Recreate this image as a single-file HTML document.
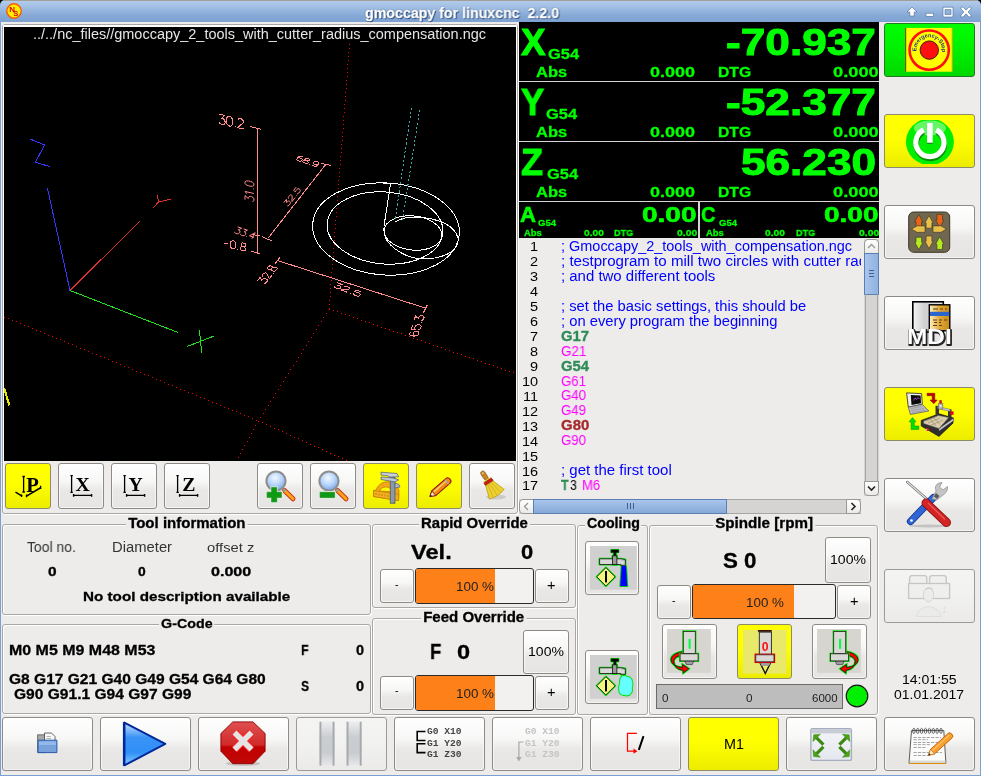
<!DOCTYPE html><html><head><meta charset="utf-8"><style>
html,body{margin:0;padding:0;}
body{width:981px;height:776px;position:relative;overflow:hidden;background:#edeceb;font-family:"Liberation Sans",sans-serif;}
.t{position:absolute;white-space:pre;line-height:1;transform-origin:0 0;will-change:transform;}
.fr{position:absolute;border:1px solid #aaa7a2;border-radius:3px;box-shadow:inset 1px 1px 0 #fff,1px 1px 0 #fff;}
.btn{position:absolute;border:1px solid #8e8b86;border-radius:3px;background:linear-gradient(#ffffff 0%,#f7f7f6 40%,#e9e8e6 60%,#e6e5e3 100%);box-shadow:inset 0 0 0 1px rgba(255,255,255,.6);overflow:hidden}
.btny{position:absolute;border:1px solid #8e8b6a;border-radius:3px;background:linear-gradient(#ffff00 0%,#ffff00 45%,#ecec00 100%);overflow:hidden}
.btng{position:absolute;border:1px solid #227a22;border-radius:3px;background:linear-gradient(#00ff00 0%,#00f000 50%,#00d800 100%);overflow:hidden}
.btnd{position:absolute;border:1px solid #9c9a96;border-radius:3px;background:linear-gradient(#f4f4f3 0%,#f1f1f0 50%,#ebeae8 100%);overflow:hidden}
</style></head><body><div style="position:absolute;left:0px;top:0px;width:6px;height:6px;background:#000;"></div>
<div style="position:absolute;left:975px;top:0px;width:6px;height:6px;background:#000;"></div>
<div style="position:absolute;left:0;top:0;width:981px;height:22px;background:linear-gradient(#b4cdeb 0%,#9fbde3 35%,#86a9d6 70%,#7da2d2 100%);border-radius:5px 5px 0 0;"></div>
<div style="position:absolute;left:4px;top:0px;width:973px;height:1px;background:#a39d98;"></div>
<div style="position:absolute;left:0px;top:22px;width:1px;height:754px;background:#7b9fd0;"></div>
<div style="position:absolute;left:980px;top:22px;width:1px;height:754px;background:#7b9fd0;"></div>
<div style="position:absolute;left:0px;top:775px;width:981px;height:1px;background:#7b9fd0;"></div>
<div class="t" style="left:364.50px;top:6.00px;font-size:14.24px;font-family:'Liberation Sans',sans-serif;font-weight:bold;color:#fff;transform:scaleX(0.9973);text-shadow:0 0 1px #1c3a66,0 0 1px #1c3a66,1px 1px 1px #2a4a78;-webkit-text-stroke:0.3px #fff;">gmoccapy for linuxcnc  2.2.0</div>
<svg style="position:absolute;left:5px;top:2px;overflow:visible;will-change:transform" width="18" height="18" viewBox="0 0 18 18"><circle cx="9" cy="9" r="7.2" fill="#ffee00" stroke="#ff5a00" stroke-width="1.4"/><text x="4.2" y="10" font-family="Liberation Sans" font-weight="bold" font-size="8" fill="#e00000">N</text><text x="8.2" y="14.2" font-family="Liberation Sans" font-weight="bold" font-size="7.5" fill="#e00000">S</text></svg>
<svg style="position:absolute;left:905px;top:5px;overflow:visible;will-change:transform" width="76" height="15" viewBox="0 0 76 15">
<g fill="#fff" stroke="#4a6a98" stroke-width="0.6">
<path d="M7 2 L12 7 L9.2 7 L9.2 11 L4.8 11 L4.8 7 L2 7 Z"/>
<rect x="21" y="8.2" width="7.4" height="3.2"/>
<path d="M38 2.2 H48 V12 H38 Z M40 4.6 V9.6 H46 V4.6 Z" fill-rule="evenodd"/>
<path d="M56 2 L58 2 L61 5.2 L64 2 L66 2 L66 4 L63 7 L66 10 L66 12 L64 12 L61 8.8 L58 12 L56 12 L56 10 L59 7 L56 4 Z"/>
</g></svg>
<div class="fr" style="left:2px;top:24px;width:514px;height:488px;"></div>
<div style="position:absolute;left:3px;top:25px;width:514px;height:436px;background:#fff;"></div>
<div style="position:absolute;left:4px;top:27px;width:512px;height:434px;background:#000;"></div>
<svg style="position:absolute;left:0px;top:0px;overflow:visible;will-change:transform" width="981" height="776" viewBox="0 0 981 776"><clipPath id="pvc"><rect x="4" y="27" width="512" height="434"/></clipPath><g clip-path="url(#pvc)" shape-rendering="crispEdges"><g fill="#ff0000"><rect x="349" y="44" width="1" height="1"/><rect x="349" y="48" width="1" height="1"/><rect x="348" y="52" width="1" height="1"/><rect x="348" y="56" width="1" height="1"/><rect x="348" y="60" width="1" height="1"/><rect x="347" y="64" width="1" height="1"/><rect x="347" y="68" width="1" height="1"/><rect x="347" y="72" width="1" height="1"/><rect x="347" y="76" width="1" height="1"/><rect x="346" y="80" width="1" height="1"/><rect x="346" y="84" width="1" height="1"/><rect x="346" y="88" width="1" height="1"/><rect x="345" y="92" width="1" height="1"/><rect x="345" y="96" width="1" height="1"/><rect x="345" y="100" width="1" height="1"/><rect x="344" y="104" width="1" height="1"/><rect x="344" y="108" width="1" height="1"/><rect x="344" y="112" width="1" height="1"/><rect x="343" y="116" width="1" height="1"/><rect x="343" y="120" width="1" height="1"/><rect x="343" y="124" width="1" height="1"/><rect x="343" y="128" width="1" height="1"/><rect x="342" y="132" width="1" height="1"/><rect x="342" y="136" width="1" height="1"/><rect x="342" y="140" width="1" height="1"/><rect x="341" y="144" width="1" height="1"/><rect x="341" y="148" width="1" height="1"/><rect x="341" y="152" width="1" height="1"/><rect x="340" y="156" width="1" height="1"/><rect x="340" y="160" width="1" height="1"/><rect x="340" y="164" width="1" height="1"/><rect x="339" y="168" width="1" height="1"/><rect x="339" y="172" width="1" height="1"/><rect x="339" y="176" width="1" height="1"/><rect x="338" y="180" width="1" height="1"/><rect x="338" y="184" width="1" height="1"/><rect x="338" y="188" width="1" height="1"/><rect x="338" y="192" width="1" height="1"/><rect x="337" y="196" width="1" height="1"/><rect x="337" y="200" width="1" height="1"/><rect x="337" y="204" width="1" height="1"/><rect x="336" y="208" width="1" height="1"/><rect x="336" y="212" width="1" height="1"/><rect x="336" y="216" width="1" height="1"/><rect x="335" y="220" width="1" height="1"/><rect x="335" y="224" width="1" height="1"/><rect x="335" y="228" width="1" height="1"/><rect x="334" y="232" width="1" height="1"/><rect x="334" y="236" width="1" height="1"/><rect x="334" y="240" width="1" height="1"/><rect x="334" y="244" width="1" height="1"/><rect x="333" y="248" width="1" height="1"/><rect x="333" y="252" width="1" height="1"/><rect x="333" y="256" width="1" height="1"/><rect x="332" y="260" width="1" height="1"/><rect x="332" y="264" width="1" height="1"/><rect x="332" y="268" width="1" height="1"/><rect x="331" y="272" width="1" height="1"/><rect x="331" y="276" width="1" height="1"/><rect x="331" y="280" width="1" height="1"/><rect x="330" y="284" width="1" height="1"/><rect x="330" y="288" width="1" height="1"/><rect x="330" y="292" width="1" height="1"/><rect x="330" y="296" width="1" height="1"/><rect x="329" y="300" width="1" height="1"/><rect x="329" y="304" width="1" height="1"/><rect x="329" y="308" width="1" height="1"/></g><g fill="#ff0000"><rect x="329" y="309" width="1" height="1"/><rect x="333" y="310" width="1" height="1"/><rect x="337" y="311" width="1" height="1"/><rect x="341" y="313" width="1" height="1"/><rect x="345" y="314" width="1" height="1"/><rect x="349" y="315" width="1" height="1"/><rect x="353" y="317" width="1" height="1"/><rect x="357" y="318" width="1" height="1"/><rect x="361" y="320" width="1" height="1"/><rect x="365" y="321" width="1" height="1"/><rect x="369" y="322" width="1" height="1"/><rect x="373" y="324" width="1" height="1"/><rect x="377" y="325" width="1" height="1"/><rect x="381" y="327" width="1" height="1"/><rect x="385" y="328" width="1" height="1"/><rect x="389" y="329" width="1" height="1"/><rect x="393" y="331" width="1" height="1"/><rect x="397" y="332" width="1" height="1"/><rect x="401" y="333" width="1" height="1"/><rect x="405" y="335" width="1" height="1"/><rect x="409" y="336" width="1" height="1"/><rect x="413" y="338" width="1" height="1"/><rect x="417" y="339" width="1" height="1"/><rect x="421" y="340" width="1" height="1"/><rect x="425" y="342" width="1" height="1"/><rect x="429" y="343" width="1" height="1"/><rect x="433" y="345" width="1" height="1"/><rect x="437" y="346" width="1" height="1"/><rect x="441" y="347" width="1" height="1"/><rect x="445" y="349" width="1" height="1"/><rect x="449" y="350" width="1" height="1"/><rect x="453" y="352" width="1" height="1"/><rect x="457" y="353" width="1" height="1"/><rect x="461" y="354" width="1" height="1"/><rect x="465" y="356" width="1" height="1"/><rect x="469" y="357" width="1" height="1"/><rect x="473" y="358" width="1" height="1"/><rect x="477" y="360" width="1" height="1"/><rect x="481" y="361" width="1" height="1"/><rect x="485" y="363" width="1" height="1"/><rect x="489" y="364" width="1" height="1"/><rect x="493" y="365" width="1" height="1"/><rect x="497" y="367" width="1" height="1"/><rect x="501" y="368" width="1" height="1"/><rect x="505" y="370" width="1" height="1"/><rect x="509" y="371" width="1" height="1"/><rect x="513" y="372" width="1" height="1"/></g><g fill="#ff0000"><rect x="329" y="309" width="1" height="1"/><rect x="326" y="313" width="1" height="1"/><rect x="323" y="317" width="1" height="1"/><rect x="321" y="321" width="1" height="1"/><rect x="318" y="325" width="1" height="1"/><rect x="316" y="329" width="1" height="1"/><rect x="313" y="333" width="1" height="1"/><rect x="311" y="337" width="1" height="1"/><rect x="308" y="341" width="1" height="1"/><rect x="306" y="345" width="1" height="1"/><rect x="303" y="349" width="1" height="1"/><rect x="301" y="353" width="1" height="1"/><rect x="298" y="357" width="1" height="1"/><rect x="296" y="361" width="1" height="1"/><rect x="293" y="365" width="1" height="1"/><rect x="290" y="369" width="1" height="1"/><rect x="288" y="373" width="1" height="1"/><rect x="285" y="377" width="1" height="1"/><rect x="283" y="381" width="1" height="1"/><rect x="280" y="385" width="1" height="1"/><rect x="278" y="389" width="1" height="1"/><rect x="275" y="393" width="1" height="1"/><rect x="273" y="397" width="1" height="1"/><rect x="270" y="401" width="1" height="1"/><rect x="268" y="405" width="1" height="1"/><rect x="265" y="409" width="1" height="1"/><rect x="263" y="413" width="1" height="1"/><rect x="260" y="417" width="1" height="1"/><rect x="258" y="421" width="1" height="1"/></g><g fill="#ff0000"><rect x="4" y="317" width="1" height="1"/><rect x="8" y="318" width="1" height="1"/><rect x="12" y="320" width="1" height="1"/><rect x="16" y="321" width="1" height="1"/><rect x="20" y="323" width="1" height="1"/><rect x="24" y="325" width="1" height="1"/><rect x="28" y="326" width="1" height="1"/><rect x="32" y="328" width="1" height="1"/><rect x="36" y="330" width="1" height="1"/><rect x="40" y="331" width="1" height="1"/><rect x="44" y="333" width="1" height="1"/><rect x="48" y="335" width="1" height="1"/><rect x="52" y="336" width="1" height="1"/><rect x="56" y="338" width="1" height="1"/><rect x="60" y="339" width="1" height="1"/><rect x="64" y="341" width="1" height="1"/><rect x="68" y="343" width="1" height="1"/><rect x="72" y="344" width="1" height="1"/><rect x="76" y="346" width="1" height="1"/><rect x="80" y="348" width="1" height="1"/><rect x="84" y="349" width="1" height="1"/><rect x="88" y="351" width="1" height="1"/><rect x="92" y="353" width="1" height="1"/><rect x="96" y="354" width="1" height="1"/><rect x="100" y="356" width="1" height="1"/><rect x="104" y="357" width="1" height="1"/><rect x="108" y="359" width="1" height="1"/><rect x="112" y="361" width="1" height="1"/><rect x="116" y="362" width="1" height="1"/><rect x="120" y="364" width="1" height="1"/><rect x="124" y="366" width="1" height="1"/><rect x="128" y="367" width="1" height="1"/><rect x="132" y="369" width="1" height="1"/><rect x="136" y="371" width="1" height="1"/><rect x="140" y="372" width="1" height="1"/><rect x="144" y="374" width="1" height="1"/><rect x="148" y="375" width="1" height="1"/><rect x="152" y="377" width="1" height="1"/><rect x="156" y="379" width="1" height="1"/><rect x="160" y="380" width="1" height="1"/><rect x="164" y="382" width="1" height="1"/><rect x="168" y="384" width="1" height="1"/><rect x="172" y="385" width="1" height="1"/><rect x="176" y="387" width="1" height="1"/><rect x="180" y="389" width="1" height="1"/><rect x="184" y="390" width="1" height="1"/><rect x="188" y="392" width="1" height="1"/><rect x="192" y="393" width="1" height="1"/><rect x="196" y="395" width="1" height="1"/><rect x="200" y="397" width="1" height="1"/><rect x="204" y="398" width="1" height="1"/><rect x="208" y="400" width="1" height="1"/><rect x="212" y="402" width="1" height="1"/><rect x="216" y="403" width="1" height="1"/><rect x="220" y="405" width="1" height="1"/><rect x="224" y="407" width="1" height="1"/><rect x="228" y="408" width="1" height="1"/><rect x="232" y="410" width="1" height="1"/><rect x="236" y="411" width="1" height="1"/><rect x="240" y="413" width="1" height="1"/><rect x="244" y="415" width="1" height="1"/><rect x="248" y="416" width="1" height="1"/><rect x="252" y="418" width="1" height="1"/><rect x="256" y="420" width="1" height="1"/></g><g fill="#ff0000"><rect x="258" y="421" width="1" height="1"/><rect x="255" y="425" width="1" height="1"/><rect x="253" y="429" width="1" height="1"/><rect x="251" y="433" width="1" height="1"/><rect x="249" y="437" width="1" height="1"/><rect x="247" y="441" width="1" height="1"/><rect x="244" y="445" width="1" height="1"/><rect x="242" y="449" width="1" height="1"/><rect x="240" y="453" width="1" height="1"/><rect x="238" y="457" width="1" height="1"/><rect x="236" y="461" width="1" height="1"/></g><g fill="#ff0000"><rect x="258" y="421" width="1" height="1"/><rect x="262" y="422" width="1" height="1"/><rect x="266" y="424" width="1" height="1"/><rect x="270" y="426" width="1" height="1"/><rect x="274" y="428" width="1" height="1"/><rect x="278" y="429" width="1" height="1"/><rect x="282" y="431" width="1" height="1"/><rect x="286" y="433" width="1" height="1"/><rect x="290" y="435" width="1" height="1"/><rect x="294" y="437" width="1" height="1"/><rect x="298" y="438" width="1" height="1"/><rect x="302" y="440" width="1" height="1"/><rect x="306" y="442" width="1" height="1"/><rect x="310" y="444" width="1" height="1"/><rect x="314" y="446" width="1" height="1"/><rect x="318" y="447" width="1" height="1"/><rect x="322" y="449" width="1" height="1"/><rect x="326" y="451" width="1" height="1"/><rect x="330" y="453" width="1" height="1"/><rect x="334" y="455" width="1" height="1"/><rect x="338" y="456" width="1" height="1"/><rect x="342" y="458" width="1" height="1"/><rect x="346" y="460" width="1" height="1"/></g><g fill="none" stroke-width="1"><polyline points="30,139 44.6,145 35.4,162.2 49.6,166.6" stroke="#3838ff"/><line x1="70" y1="290.5" x2="47.4" y2="188" stroke="#3838ff"/><line x1="70" y1="290.5" x2="140" y2="221" stroke="#e03030"/><path d="M157.4 195 L158.6 202 L170.9 199 M158.6 202 L153.2 207.8" stroke="#e03030"/><line x1="70" y1="290.5" x2="177.8" y2="332.4" stroke="#20e020"/><path d="M187.1 346.5 L213.8 336.1 M199.4 330 L201.7 352.8" stroke="#20e020"/></g><line x1="4" y1="388" x2="9.5" y2="405.5" stroke="#e8e800" stroke-width="2.2"/><g fill="none" stroke="#ff8c8c" stroke-width="1"><line x1="257" y1="128.6" x2="257" y2="252.8"/><line x1="249.9" y1="126.6" x2="261.5" y2="129.4"/><line x1="251" y1="251.2" x2="260.3" y2="253.8"/><line x1="252" y1="234.5" x2="260" y2="236"/><line x1="267.9" y1="238.4" x2="325.4" y2="164.9"/><line x1="320.8" y1="163.3" x2="330.8" y2="165.3"/><line x1="262.3" y1="236.8" x2="271.5" y2="240.8"/><line x1="278.1" y1="260.7" x2="425.3" y2="308.1"/><line x1="275.2" y1="263.6" x2="280" y2="257.4"/><line x1="423.3" y1="313" x2="427.2" y2="305.2"/></g><g transform="matrix(1.0 0.21 0 0.96 219.00 114.20)" fill="none" stroke="#ff8c8c" stroke-width="1" vector-effect="non-scaling-stroke"><path d="M0.5 0 L5.5 0 L2.8 3.8 L4 3.8 L5.4 4.6 L6 6.3 L6 7.5 L5.3 9.2 L4 10 L2 10 L0.7 9.4 L0 8.4" transform="translate(0 0)" vector-effect="non-scaling-stroke"/><path d="M2 0 L4 0 L5.5 1.5 L6 4 L6 6 L5.5 8.5 L4 10 L2 10 L0.5 8.5 L0 6 L0 4 L0.5 1.5 Z" transform="translate(7.5 0)" vector-effect="non-scaling-stroke"/><path d="M0.5 9.5 L1.5 9.5" transform="translate(15.0 0)" vector-effect="non-scaling-stroke"/><path d="M0.3 2.2 L1 0.7 L2.3 0 L3.8 0 L5.2 0.7 L5.8 2 L5.6 3.5 L4.5 5 L0 10 L6 10" transform="translate(18.5 0)" vector-effect="non-scaling-stroke"/></g><g transform="matrix(0 -0.81 0.89 0.2 245.00 200.00)" fill="none" stroke="#ff8c8c" stroke-width="1" vector-effect="non-scaling-stroke"><path d="M0.5 0 L5.5 0 L2.8 3.8 L4 3.8 L5.4 4.6 L6 6.3 L6 7.5 L5.3 9.2 L4 10 L2 10 L0.7 9.4 L0 8.4" transform="translate(0 0)" vector-effect="non-scaling-stroke"/><path d="M0.8 2 L3 0 L3 10" transform="translate(7.5 0)" vector-effect="non-scaling-stroke"/><path d="M0.5 9.5 L1.5 9.5" transform="translate(15.0 0)" vector-effect="non-scaling-stroke"/><path d="M2 0 L4 0 L5.5 1.5 L6 4 L6 6 L5.5 8.5 L4 10 L2 10 L0.5 8.5 L0 6 L0 4 L0.5 1.5 Z" transform="translate(18.5 0)" vector-effect="non-scaling-stroke"/></g><g transform="matrix(0.78 0.26 -0.33 0.6 237.30 226.80)" fill="none" stroke="#ff8c8c" stroke-width="1" vector-effect="non-scaling-stroke"><path d="M0.5 0 L5.5 0 L2.8 3.8 L4 3.8 L5.4 4.6 L6 6.3 L6 7.5 L5.3 9.2 L4 10 L2 10 L0.7 9.4 L0 8.4" transform="translate(0 0)" vector-effect="non-scaling-stroke"/><path d="M0.5 0 L5.5 0 L2.8 3.8 L4 3.8 L5.4 4.6 L6 6.3 L6 7.5 L5.3 9.2 L4 10 L2 10 L0.7 9.4 L0 8.4" transform="translate(7.5 0)" vector-effect="non-scaling-stroke"/><path d="M0.5 9.5 L1.5 9.5" transform="translate(15.0 0)" vector-effect="non-scaling-stroke"/><path d="M4.5 10 L4.5 0 L0 7 L6 7" transform="translate(18.5 0)" vector-effect="non-scaling-stroke"/></g><g transform="matrix(0.92 0.2 -0.05 0.77 223.60 238.80)" fill="none" stroke="#ff8c8c" stroke-width="1" vector-effect="non-scaling-stroke"><path d="M0.5 5.5 L5 5.5" transform="translate(0 0)" vector-effect="non-scaling-stroke"/><path d="M2 0 L4 0 L5.5 1.5 L6 4 L6 6 L5.5 8.5 L4 10 L2 10 L0.5 8.5 L0 6 L0 4 L0.5 1.5 Z" transform="translate(7.5 0)" vector-effect="non-scaling-stroke"/><path d="M0.5 9.5 L1.5 9.5" transform="translate(15.0 0)" vector-effect="non-scaling-stroke"/><path d="M2.2 0 L0.8 0.5 L0.5 2 L0.8 3.5 L2.2 4.4 L3.8 4.8 L5.3 5.8 L6 7.2 L6 8.5 L5.5 9.5 L4 10 L2 10 L0.5 9.5 L0 8.5 L0 7.2 L0.7 5.8 L2.2 4.8 L3.8 4.4 L5.2 3.5 L5.5 2 L5.2 0.5 L3.8 0 Z" transform="translate(18.5 0)" vector-effect="non-scaling-stroke"/></g><g transform="matrix(0.84 0.28 -0.3 0.45 299.00 155.50)" fill="none" stroke="#ff8c8c" stroke-width="1" vector-effect="non-scaling-stroke"><path d="M5.3 1.2 L4.5 0.2 L3.2 0 L2 0.2 L0.7 1.5 L0 4 L0 6.5 L0.6 8.8 L1.8 9.8 L3 10 L4.3 9.8 L5.5 8.8 L6 7.2 L6 6.5 L5.5 5 L4.3 4 L3 3.8 L1.8 4 L0.6 5 L0 6.5" transform="translate(0 0)" vector-effect="non-scaling-stroke"/><path d="M2.2 0 L0.8 0.5 L0.5 2 L0.8 3.5 L2.2 4.4 L3.8 4.8 L5.3 5.8 L6 7.2 L6 8.5 L5.5 9.5 L4 10 L2 10 L0.5 9.5 L0 8.5 L0 7.2 L0.7 5.8 L2.2 4.8 L3.8 4.4 L5.2 3.5 L5.5 2 L5.2 0.5 L3.8 0 Z" transform="translate(7.5 0)" vector-effect="non-scaling-stroke"/><path d="M0.5 9.5 L1.5 9.5" transform="translate(15.0 0)" vector-effect="non-scaling-stroke"/><path d="M6 4 L5.4 5.5 L4.2 6.3 L3 6.5 L1.8 6.3 L0.6 5.5 L0 4 L0 3.2 L0.6 1.3 L1.8 0.2 L3 0 L4.2 0.2 L5.4 1.3 L6 3.2 L6 6 L5.4 8.8 L4.2 9.8 L3 10 L1.7 9.8 L0.8 9" transform="translate(18.5 0)" vector-effect="non-scaling-stroke"/></g><g transform="matrix(0.53 -0.66 0.45 0.35 283.50 203.00)" fill="none" stroke="#ff8c8c" stroke-width="1" vector-effect="non-scaling-stroke"><path d="M0.5 0 L5.5 0 L2.8 3.8 L4 3.8 L5.4 4.6 L6 6.3 L6 7.5 L5.3 9.2 L4 10 L2 10 L0.7 9.4 L0 8.4" transform="translate(0 0)" vector-effect="non-scaling-stroke"/><path d="M0.3 2.2 L1 0.7 L2.3 0 L3.8 0 L5.2 0.7 L5.8 2 L5.6 3.5 L4.5 5 L0 10 L6 10" transform="translate(7.5 0)" vector-effect="non-scaling-stroke"/><path d="M0.5 9.5 L1.5 9.5" transform="translate(15.0 0)" vector-effect="non-scaling-stroke"/><path d="M5.5 0 L0.8 0 L0.4 4.3 L1 3.8 L2.5 3.4 L4 3.4 L5.4 4.2 L6 6 L6 7.4 L5.4 9.2 L4 10 L2 10 L0.7 9.4 L0 8.4" transform="translate(18.5 0)" vector-effect="non-scaling-stroke"/></g><g transform="matrix(0.51 -0.65 0.82 0.26 257.20 281.10)" fill="none" stroke="#ff8c8c" stroke-width="1" vector-effect="non-scaling-stroke"><path d="M0.5 0 L5.5 0 L2.8 3.8 L4 3.8 L5.4 4.6 L6 6.3 L6 7.5 L5.3 9.2 L4 10 L2 10 L0.7 9.4 L0 8.4" transform="translate(0 0)" vector-effect="non-scaling-stroke"/><path d="M0.3 2.2 L1 0.7 L2.3 0 L3.8 0 L5.2 0.7 L5.8 2 L5.6 3.5 L4.5 5 L0 10 L6 10" transform="translate(7.5 0)" vector-effect="non-scaling-stroke"/><path d="M0.5 9.5 L1.5 9.5" transform="translate(15.0 0)" vector-effect="non-scaling-stroke"/><path d="M2.2 0 L0.8 0.5 L0.5 2 L0.8 3.5 L2.2 4.4 L3.8 4.8 L5.3 5.8 L6 7.2 L6 8.5 L5.5 9.5 L4 10 L2 10 L0.5 9.5 L0 8.5 L0 7.2 L0.7 5.8 L2.2 4.8 L3.8 4.4 L5.2 3.5 L5.5 2 L5.2 0.5 L3.8 0 Z" transform="translate(18.5 0)" vector-effect="non-scaling-stroke"/></g><g transform="matrix(1.04 0.4 -0.28 0.46 336.30 282.40)" fill="none" stroke="#ff8c8c" stroke-width="1" vector-effect="non-scaling-stroke"><path d="M0.5 0 L5.5 0 L2.8 3.8 L4 3.8 L5.4 4.6 L6 6.3 L6 7.5 L5.3 9.2 L4 10 L2 10 L0.7 9.4 L0 8.4" transform="translate(0 0)" vector-effect="non-scaling-stroke"/><path d="M0.3 2.2 L1 0.7 L2.3 0 L3.8 0 L5.2 0.7 L5.8 2 L5.6 3.5 L4.5 5 L0 10 L6 10" transform="translate(7.5 0)" vector-effect="non-scaling-stroke"/><path d="M0.5 9.5 L1.5 9.5" transform="translate(15.0 0)" vector-effect="non-scaling-stroke"/><path d="M5.5 0 L0.8 0 L0.4 4.3 L1 3.8 L2.5 3.4 L4 3.4 L5.4 4.2 L6 6 L6 7.4 L5.4 9.2 L4 10 L2 10 L0.7 9.4 L0 8.4" transform="translate(18.5 0)" vector-effect="non-scaling-stroke"/></g><g transform="matrix(0.27 -0.83 0.9 0 409.00 336.00)" fill="none" stroke="#ff8c8c" stroke-width="1" vector-effect="non-scaling-stroke"><path d="M5.3 1.2 L4.5 0.2 L3.2 0 L2 0.2 L0.7 1.5 L0 4 L0 6.5 L0.6 8.8 L1.8 9.8 L3 10 L4.3 9.8 L5.5 8.8 L6 7.2 L6 6.5 L5.5 5 L4.3 4 L3 3.8 L1.8 4 L0.6 5 L0 6.5" transform="translate(0 0)" vector-effect="non-scaling-stroke"/><path d="M5.5 0 L0.8 0 L0.4 4.3 L1 3.8 L2.5 3.4 L4 3.4 L5.4 4.2 L6 6 L6 7.4 L5.4 9.2 L4 10 L2 10 L0.7 9.4 L0 8.4" transform="translate(7.5 0)" vector-effect="non-scaling-stroke"/><path d="M0.5 9.5 L1.5 9.5" transform="translate(15.0 0)" vector-effect="non-scaling-stroke"/><path d="M0.5 0 L5.5 0 L2.8 3.8 L4 3.8 L5.4 4.6 L6 6.3 L6 7.5 L5.3 9.2 L4 10 L2 10 L0.7 9.4 L0 8.4" transform="translate(18.5 0)" vector-effect="non-scaling-stroke"/></g><g fill="none" stroke="#ffffff" stroke-width="1"><ellipse cx="386" cy="229" rx="73.5" ry="46" transform="rotate(4 386 229)"/><ellipse cx="385" cy="228" rx="58" ry="36" transform="rotate(5 385 228)"/><path d="M383 183.5 L390.6 183.5 L384 226 "/><ellipse cx="413" cy="233" rx="29" ry="17" transform="rotate(6 413 233)"/><path d="M384 228 C 382 245, 405 258, 422 259 C 445 259, 460 250, 458 238 C 455 226, 440 218, 415 217 C 405 217, 398 220, 395 222"/></g><g stroke="#3aa6a6" stroke-width="1" stroke-dasharray="2.2 2.2"><line x1="411.5" y1="107.6" x2="395" y2="221"/><line x1="419.7" y1="109.6" x2="402" y2="223"/></g></g></svg>
<div class="t" style="left:33.00px;top:27.00px;font-size:14.39px;font-family:'Liberation Sans',sans-serif;font-weight:normal;color:#e6e6e6;transform:scaleX(1.0070);">../../nc_files//gmoccapy_2_tools_with_cutter_radius_compensation.ngc</div>
<div class="btny" style="left:5px;top:463px;width:44px;height:44px;"></div>
<div class="btn" style="left:58px;top:463px;width:44px;height:44px;"></div>
<div class="btn" style="left:111px;top:463px;width:44px;height:44px;"></div>
<div class="btn" style="left:164px;top:463px;width:44px;height:44px;"></div>
<div class="btn" style="left:257px;top:463px;width:44px;height:44px;"></div>
<div class="btn" style="left:310px;top:463px;width:44px;height:44px;"></div>
<div class="btny" style="left:363px;top:463px;width:44px;height:44px;"></div>
<div class="btny" style="left:416px;top:463px;width:44px;height:44px;"></div>
<div class="btn" style="left:469px;top:463px;width:44px;height:44px;"></div>
<div style="position:absolute;left:519px;top:22px;width:360px;height:216px;background:#000;"></div>
<div style="position:absolute;left:519px;top:81px;width:360px;height:1px;background:#d6d6d6;"></div>
<div style="position:absolute;left:519px;top:141px;width:360px;height:1px;background:#d6d6d6;"></div>
<div style="position:absolute;left:519px;top:201px;width:360px;height:1px;background:#d6d6d6;"></div>
<div style="position:absolute;left:698px;top:202px;width:2px;height:36px;background:#d6d6d6;"></div>
<div class="t" style="left:520.50px;top:25.00px;font-size:36.63px;font-family:'Liberation Sans',sans-serif;font-weight:bold;color:#00ff00;transform:scaleX(1.0069);-webkit-text-stroke:1px #00ff00;">X</div>
<div class="t" style="left:547.70px;top:47.00px;font-size:14.83px;font-family:'Liberation Sans',sans-serif;font-weight:bold;color:#00ff00;transform:scaleX(1.1099);-webkit-text-stroke:0.3px #00ff00;">G54</div>
<div class="t" style="left:536.20px;top:65.00px;font-size:14.86px;font-family:'Liberation Sans',sans-serif;font-weight:bold;color:#00ff00;transform:scaleX(1.1078);-webkit-text-stroke:0.3px #00ff00;">Abs</div>
<div class="t" style="left:649.70px;top:65.00px;font-size:14.86px;font-family:'Liberation Sans',sans-serif;font-weight:bold;color:#00ff00;transform:scaleX(1.2133);-webkit-text-stroke:0.3px #00ff00;">0.000</div>
<div class="t" style="left:717.70px;top:65.00px;font-size:14.83px;font-family:'Liberation Sans',sans-serif;font-weight:bold;color:#00ff00;transform:scaleX(1.0576);-webkit-text-stroke:0.3px #00ff00;">DTG</div>
<div class="t" style="left:833.10px;top:65.00px;font-size:14.86px;font-family:'Liberation Sans',sans-serif;font-weight:bold;color:#00ff00;transform:scaleX(1.2294);-webkit-text-stroke:0.3px #00ff00;">0.000</div>
<div class="t" style="left:725.50px;top:24.00px;font-size:37.29px;font-family:'Liberation Sans',sans-serif;font-weight:bold;color:#00ff00;transform:scaleX(1.1860);-webkit-text-stroke:1px #00ff00;">-70.937</div>
<div class="t" style="left:520.50px;top:85.00px;font-size:36.63px;font-family:'Liberation Sans',sans-serif;font-weight:bold;color:#00ff00;transform:scaleX(0.9496);-webkit-text-stroke:1px #00ff00;">Y</div>
<div class="t" style="left:545.70px;top:107.00px;font-size:14.83px;font-family:'Liberation Sans',sans-serif;font-weight:bold;color:#00ff00;transform:scaleX(1.1099);-webkit-text-stroke:0.3px #00ff00;">G54</div>
<div class="t" style="left:536.20px;top:125.00px;font-size:14.86px;font-family:'Liberation Sans',sans-serif;font-weight:bold;color:#00ff00;transform:scaleX(1.1078);-webkit-text-stroke:0.3px #00ff00;">Abs</div>
<div class="t" style="left:649.70px;top:125.00px;font-size:14.86px;font-family:'Liberation Sans',sans-serif;font-weight:bold;color:#00ff00;transform:scaleX(1.2133);-webkit-text-stroke:0.3px #00ff00;">0.000</div>
<div class="t" style="left:717.70px;top:125.00px;font-size:14.83px;font-family:'Liberation Sans',sans-serif;font-weight:bold;color:#00ff00;transform:scaleX(1.0576);-webkit-text-stroke:0.3px #00ff00;">DTG</div>
<div class="t" style="left:833.10px;top:125.00px;font-size:14.86px;font-family:'Liberation Sans',sans-serif;font-weight:bold;color:#00ff00;transform:scaleX(1.2294);-webkit-text-stroke:0.3px #00ff00;">0.000</div>
<div class="t" style="left:725.50px;top:84.00px;font-size:37.29px;font-family:'Liberation Sans',sans-serif;font-weight:bold;color:#00ff00;transform:scaleX(1.1860);-webkit-text-stroke:1px #00ff00;">-52.377</div>
<div class="t" style="left:520.50px;top:145.00px;font-size:36.63px;font-family:'Liberation Sans',sans-serif;font-weight:bold;color:#00ff00;transform:scaleX(0.9830);-webkit-text-stroke:1px #00ff00;">Z</div>
<div class="t" style="left:546.50px;top:167.00px;font-size:14.83px;font-family:'Liberation Sans',sans-serif;font-weight:bold;color:#00ff00;transform:scaleX(1.1099);-webkit-text-stroke:0.3px #00ff00;">G54</div>
<div class="t" style="left:536.20px;top:185.00px;font-size:14.86px;font-family:'Liberation Sans',sans-serif;font-weight:bold;color:#00ff00;transform:scaleX(1.1078);-webkit-text-stroke:0.3px #00ff00;">Abs</div>
<div class="t" style="left:649.70px;top:185.00px;font-size:14.86px;font-family:'Liberation Sans',sans-serif;font-weight:bold;color:#00ff00;transform:scaleX(1.2133);-webkit-text-stroke:0.3px #00ff00;">0.000</div>
<div class="t" style="left:717.70px;top:185.00px;font-size:14.83px;font-family:'Liberation Sans',sans-serif;font-weight:bold;color:#00ff00;transform:scaleX(1.0576);-webkit-text-stroke:0.3px #00ff00;">DTG</div>
<div class="t" style="left:833.10px;top:185.00px;font-size:14.86px;font-family:'Liberation Sans',sans-serif;font-weight:bold;color:#00ff00;transform:scaleX(1.2294);-webkit-text-stroke:0.3px #00ff00;">0.000</div>
<div class="t" style="left:740.50px;top:144.00px;font-size:37.29px;font-family:'Liberation Sans',sans-serif;font-weight:bold;color:#00ff00;transform:scaleX(1.1836);-webkit-text-stroke:1px #00ff00;">56.230</div>
<div class="t" style="left:519.60px;top:204.00px;font-size:22.14px;font-family:'Liberation Sans',sans-serif;font-weight:bold;color:#00ff00;transform:scaleX(1.0008);-webkit-text-stroke:0.6px #00ff00;">A</div>
<div class="t" style="left:537.90px;top:218.00px;font-size:9.45px;font-family:'Liberation Sans',sans-serif;font-weight:bold;color:#00ff00;transform:scaleX(1.0137);-webkit-text-stroke:0.3px #00ff00;">G54</div>
<div class="t" style="left:524.30px;top:229.00px;font-size:8.89px;font-family:'Liberation Sans',sans-serif;font-weight:bold;color:#00ff00;transform:scaleX(1.0601);-webkit-text-stroke:0.3px #00ff00;">Abs</div>
<div class="t" style="left:583.80px;top:229.00px;font-size:9.14px;font-family:'Liberation Sans',sans-serif;font-weight:bold;color:#00ff00;transform:scaleX(1.1185);-webkit-text-stroke:0.3px #00ff00;">0.00</div>
<div class="t" style="left:614.40px;top:229.00px;font-size:9.30px;font-family:'Liberation Sans',sans-serif;font-weight:bold;color:#00ff00;transform:scaleX(0.9726);-webkit-text-stroke:0.3px #00ff00;">DTG</div>
<div class="t" style="left:677.30px;top:229.00px;font-size:9.14px;font-family:'Liberation Sans',sans-serif;font-weight:bold;color:#00ff00;transform:scaleX(1.1353);-webkit-text-stroke:0.3px #00ff00;">0.00</div>
<div class="t" style="left:642.20px;top:205.00px;font-size:21.29px;font-family:'Liberation Sans',sans-serif;font-weight:bold;color:#00ff00;transform:scaleX(1.3157);-webkit-text-stroke:0.6px #00ff00;">0.00</div>
<div class="t" style="left:701.10px;top:204.00px;font-size:22.14px;font-family:'Liberation Sans',sans-serif;font-weight:bold;color:#00ff00;transform:scaleX(0.9070);-webkit-text-stroke:0.6px #00ff00;">C</div>
<div class="t" style="left:719.40px;top:218.00px;font-size:9.45px;font-family:'Liberation Sans',sans-serif;font-weight:bold;color:#00ff00;transform:scaleX(1.0137);-webkit-text-stroke:0.3px #00ff00;">G54</div>
<div class="t" style="left:705.80px;top:229.00px;font-size:8.89px;font-family:'Liberation Sans',sans-serif;font-weight:bold;color:#00ff00;transform:scaleX(1.0601);-webkit-text-stroke:0.3px #00ff00;">Abs</div>
<div class="t" style="left:765.30px;top:229.00px;font-size:9.14px;font-family:'Liberation Sans',sans-serif;font-weight:bold;color:#00ff00;transform:scaleX(1.1185);-webkit-text-stroke:0.3px #00ff00;">0.00</div>
<div class="t" style="left:795.90px;top:229.00px;font-size:9.30px;font-family:'Liberation Sans',sans-serif;font-weight:bold;color:#00ff00;transform:scaleX(0.9726);-webkit-text-stroke:0.3px #00ff00;">DTG</div>
<div class="t" style="left:858.80px;top:229.00px;font-size:9.14px;font-family:'Liberation Sans',sans-serif;font-weight:bold;color:#00ff00;transform:scaleX(1.1353);-webkit-text-stroke:0.3px #00ff00;">0.00</div>
<div class="t" style="left:823.70px;top:205.00px;font-size:21.29px;font-family:'Liberation Sans',sans-serif;font-weight:bold;color:#00ff00;transform:scaleX(1.3157);-webkit-text-stroke:0.6px #00ff00;">0.00</div>
<div style="position:absolute;left:519px;top:238px;width:345px;height:261px;background:#edeceb;"></div>
<div class="t" style="left:530.34px;top:240.00px;font-size:13.43px;font-family:'Liberation Sans',sans-serif;font-weight:normal;color:#000;transform:scaleX(1.0800);">1</div>
<div class="t" style="left:530.34px;top:255.00px;font-size:13.43px;font-family:'Liberation Sans',sans-serif;font-weight:normal;color:#000;transform:scaleX(1.0800);">2</div>
<div class="t" style="left:530.34px;top:270.00px;font-size:13.43px;font-family:'Liberation Sans',sans-serif;font-weight:normal;color:#000;transform:scaleX(1.0800);">3</div>
<div class="t" style="left:530.34px;top:285.00px;font-size:13.43px;font-family:'Liberation Sans',sans-serif;font-weight:normal;color:#000;transform:scaleX(1.0800);">4</div>
<div class="t" style="left:530.34px;top:300.00px;font-size:13.43px;font-family:'Liberation Sans',sans-serif;font-weight:normal;color:#000;transform:scaleX(1.0800);">5</div>
<div class="t" style="left:530.34px;top:315.00px;font-size:13.43px;font-family:'Liberation Sans',sans-serif;font-weight:normal;color:#000;transform:scaleX(1.0800);">6</div>
<div class="t" style="left:530.34px;top:330.00px;font-size:13.43px;font-family:'Liberation Sans',sans-serif;font-weight:normal;color:#000;transform:scaleX(1.0800);">7</div>
<div class="t" style="left:530.34px;top:345.00px;font-size:13.43px;font-family:'Liberation Sans',sans-serif;font-weight:normal;color:#000;transform:scaleX(1.0800);">8</div>
<div class="t" style="left:530.34px;top:360.00px;font-size:13.43px;font-family:'Liberation Sans',sans-serif;font-weight:normal;color:#000;transform:scaleX(1.0800);">9</div>
<div class="t" style="left:522.27px;top:375.00px;font-size:13.43px;font-family:'Liberation Sans',sans-serif;font-weight:normal;color:#000;transform:scaleX(1.0800);">10</div>
<div class="t" style="left:523.35px;top:390.00px;font-size:13.43px;font-family:'Liberation Sans',sans-serif;font-weight:normal;color:#000;transform:scaleX(1.0800);">11</div>
<div class="t" style="left:522.27px;top:405.00px;font-size:13.43px;font-family:'Liberation Sans',sans-serif;font-weight:normal;color:#000;transform:scaleX(1.0800);">12</div>
<div class="t" style="left:522.27px;top:420.00px;font-size:13.43px;font-family:'Liberation Sans',sans-serif;font-weight:normal;color:#000;transform:scaleX(1.0800);">13</div>
<div class="t" style="left:522.27px;top:435.00px;font-size:13.43px;font-family:'Liberation Sans',sans-serif;font-weight:normal;color:#000;transform:scaleX(1.0800);">14</div>
<div class="t" style="left:522.27px;top:450.00px;font-size:13.43px;font-family:'Liberation Sans',sans-serif;font-weight:normal;color:#000;transform:scaleX(1.0800);">15</div>
<div class="t" style="left:522.27px;top:465.00px;font-size:13.43px;font-family:'Liberation Sans',sans-serif;font-weight:normal;color:#000;transform:scaleX(1.0800);">16</div>
<div class="t" style="left:522.27px;top:479.00px;font-size:13.43px;font-family:'Liberation Sans',sans-serif;font-weight:normal;color:#000;transform:scaleX(1.0800);">17</div>
<div style="position:absolute;left:519px;top:238px;width:342px;height:261px;overflow:hidden">
<div class="t" style="left:41.50px;top:2.00px;font-size:13.95px;font-family:'Liberation Sans',sans-serif;font-weight:normal;color:#0000ff;transform:scaleX(1.0378);clip-path:none;">; Gmoccapy_2_tools_with_compensation.ngc</div>
<div class="t" style="left:41.50px;top:17.00px;font-size:13.95px;font-family:'Liberation Sans',sans-serif;font-weight:normal;color:#0000ff;transform:scaleX(1.0829);clip-path:none;">; testprogram to mill two circles with cutter radius compensation</div>
<div class="t" style="left:41.50px;top:32.00px;font-size:13.95px;font-family:'Liberation Sans',sans-serif;font-weight:normal;color:#0000ff;transform:scaleX(1.0728);clip-path:none;">; and two different tools</div>
<div class="t" style="left:41.50px;top:62.00px;font-size:13.95px;font-family:'Liberation Sans',sans-serif;font-weight:normal;color:#0000ff;transform:scaleX(1.0581);clip-path:none;">; set the basic settings, this should be</div>
<div class="t" style="left:41.50px;top:77.00px;font-size:13.95px;font-family:'Liberation Sans',sans-serif;font-weight:normal;color:#0000ff;transform:scaleX(1.0582);clip-path:none;">; on every program the beginning</div>
<div class="t" style="left:41.50px;top:92.00px;font-size:13.95px;font-family:'Liberation Sans',sans-serif;font-weight:bold;color:#2e8b57;transform:scaleX(1.0655);clip-path:none;-webkit-text-stroke:0.3px #2e8b57;">G17</div>
<div class="t" style="left:41.50px;top:107.00px;font-size:13.95px;font-family:'Liberation Sans',sans-serif;font-weight:normal;color:#ff00ff;transform:scaleX(0.9669);clip-path:none;">G21</div>
<div class="t" style="left:41.50px;top:122.00px;font-size:13.95px;font-family:'Liberation Sans',sans-serif;font-weight:bold;color:#2e8b57;transform:scaleX(1.0655);clip-path:none;-webkit-text-stroke:0.3px #2e8b57;">G54</div>
<div class="t" style="left:41.50px;top:137.00px;font-size:13.95px;font-family:'Liberation Sans',sans-serif;font-weight:normal;color:#ff00ff;transform:scaleX(0.9518);clip-path:none;">G61</div>
<div class="t" style="left:41.50px;top:151.00px;font-size:13.95px;font-family:'Liberation Sans',sans-serif;font-weight:normal;color:#ff00ff;transform:scaleX(0.9518);clip-path:none;">G40</div>
<div class="t" style="left:41.50px;top:166.00px;font-size:13.95px;font-family:'Liberation Sans',sans-serif;font-weight:normal;color:#ff00ff;transform:scaleX(0.9518);clip-path:none;">G49</div>
<div class="t" style="left:41.50px;top:181.00px;font-size:13.95px;font-family:'Liberation Sans',sans-serif;font-weight:bold;color:#a52a2a;transform:scaleX(1.0731);clip-path:none;-webkit-text-stroke:0.3px #a52a2a;">G80</div>
<div class="t" style="left:41.50px;top:196.00px;font-size:13.95px;font-family:'Liberation Sans',sans-serif;font-weight:normal;color:#ff00ff;transform:scaleX(0.9518);clip-path:none;">G90</div>
<div class="t" style="left:41.50px;top:226.00px;font-size:13.95px;font-family:'Liberation Sans',sans-serif;font-weight:normal;color:#0000ff;transform:scaleX(1.0750);clip-path:none;">; get the first tool</div>
<div class="t" style="left:41.50px;top:241.00px;font-size:13.95px;font-family:'Liberation Sans',sans-serif;font-weight:bold;color:#2e8b57;transform:scaleX(0.8797);-webkit-text-stroke:0.3px #2e8b57;">T</div>
<div class="t" style="left:50.60px;top:241.00px;font-size:13.86px;font-family:'Liberation Sans',sans-serif;font-weight:normal;color:#000;transform:scaleX(0.8956);">3</div>
<div class="t" style="left:62.80px;top:241.00px;font-size:13.95px;font-family:'Liberation Sans',sans-serif;font-weight:normal;color:#ff00ff;transform:scaleX(0.9442);">M6</div>
</div>
<div style="position:absolute;left:861px;top:238px;width:3px;height:261px;background:#edeceb;"></div>
<div style="position:absolute;left:864px;top:239px;width:15px;height:257px;background:#d5d4d2;border-radius:0;"></div>
<div style="position:absolute;left:864px;top:239px;width:13px;height:13px;border:1px solid #9a9894;border-radius:4px 4px 0 0;background:linear-gradient(#ffffff,#ebeae8);"></div>
<div style="position:absolute;left:864px;top:253px;width:13px;height:40px;border:1px solid #5b7fb2;background:linear-gradient(90deg,#a9c6ec,#8fb2e0);"></div>
<div style="position:absolute;left:869px;top:270px;width:5px;height:1px;background:#3f5f8f;"></div>
<div style="position:absolute;left:869px;top:273px;width:5px;height:1px;background:#3f5f8f;"></div>
<div style="position:absolute;left:869px;top:276px;width:5px;height:1px;background:#3f5f8f;"></div>
<div style="position:absolute;left:864px;top:481px;width:13px;height:13px;border:1px solid #9a9894;border-radius:0 0 4px 4px;background:linear-gradient(#ffffff,#ebeae8);"></div>
<div style="position:absolute;left:865px;top:294px;width:1px;height:187px;background:#a8a6a2;"></div>
<div style="position:absolute;left:877px;top:294px;width:1px;height:187px;background:#a8a6a2;"></div>
<svg style="position:absolute;left:864px;top:239px;overflow:visible;will-change:transform" width="15" height="15" viewBox="0 0 15 15"><polyline points="4,9 7.5,5.5 11,9" fill="none" stroke="#9a9894" stroke-width="1.3"/></svg>
<svg style="position:absolute;left:864px;top:481px;overflow:visible;will-change:transform" width="15" height="15" viewBox="0 0 15 15"><polyline points="4,5.5 7.5,9 11,5.5" fill="none" stroke="#222" stroke-width="1.6"/></svg>
<div style="position:absolute;left:519px;top:499px;width:342px;height:15px;background:#d5d4d2;"></div>
<div style="position:absolute;left:533px;top:499px;width:328px;height:1px;background:#a8a6a2;"></div>
<div style="position:absolute;left:533px;top:513px;width:328px;height:1px;background:#a8a6a2;"></div>
<div style="position:absolute;left:519px;top:499px;width:13px;height:13px;border:1px solid #9a9894;border-radius:4px 0 0 4px;background:linear-gradient(#ffffff,#ebeae8);"></div>
<div style="position:absolute;left:533px;top:499px;width:192px;height:13px;border:1px solid #5b7fb2;background:linear-gradient(#a9c6ec,#86a9d8);"></div>
<div style="position:absolute;left:627px;top:503px;width:1px;height:6px;background:#3f5f8f;"></div>
<div style="position:absolute;left:630px;top:503px;width:1px;height:6px;background:#3f5f8f;"></div>
<div style="position:absolute;left:633px;top:503px;width:1px;height:6px;background:#3f5f8f;"></div>
<div style="position:absolute;left:846px;top:499px;width:13px;height:13px;border:1px solid #9a9894;border-radius:0 4px 4px 0;background:linear-gradient(#ffffff,#ebeae8);"></div>
<svg style="position:absolute;left:519px;top:499px;overflow:visible;will-change:transform" width="15" height="15" viewBox="0 0 15 15"><polyline points="9,4 5.5,7.5 9,11" fill="none" stroke="#9a9894" stroke-width="1.3"/></svg>
<svg style="position:absolute;left:846px;top:499px;overflow:visible;will-change:transform" width="15" height="15" viewBox="0 0 15 15"><polyline points="5.5,4 9,7.5 5.5,11" fill="none" stroke="#222" stroke-width="1.6"/></svg>
<div class="btng" style="left:884px;top:23px;width:89px;height:52px;"></div>
<div class="btny" style="left:884px;top:114px;width:89px;height:52px;"></div>
<div class="btn" style="left:884px;top:205px;width:89px;height:52px;"></div>
<div class="btn" style="left:884px;top:296px;width:89px;height:52px;"></div>
<div class="btny" style="left:884px;top:387px;width:89px;height:52px;"></div>
<div class="btn" style="left:884px;top:478px;width:89px;height:52px;"></div>
<div class="btnd" style="left:884px;top:569px;width:89px;height:52px;"></div>
<div class="t" style="left:901.60px;top:673.00px;font-size:13.29px;font-family:'Liberation Sans',sans-serif;font-weight:normal;color:#000;transform:scaleX(1.0576);">14:01:55</div>
<div class="t" style="left:893.90px;top:688.00px;font-size:13.14px;font-family:'Liberation Sans',sans-serif;font-weight:normal;color:#000;transform:scaleX(1.0657);">01.01.2017</div>
<div class="fr" style="left:2px;top:524px;width:367px;height:89px;"></div>
<div class="t" style="left:127.90px;top:516.00px;font-size:14.10px;font-family:'Liberation Sans',sans-serif;font-weight:bold;color:#000;transform:scaleX(1.0656);background:#edeceb;padding:0 2px;margin-left:-2px;-webkit-text-stroke:0.3px #000;">Tool information</div>
<div class="t" style="left:27.40px;top:540.00px;font-size:14.24px;font-family:'Liberation Sans',sans-serif;font-weight:normal;color:#333;transform:scaleX(0.9803);">Tool no.</div>
<div class="t" style="left:111.60px;top:540.00px;font-size:14.24px;font-family:'Liberation Sans',sans-serif;font-weight:normal;color:#333;transform:scaleX(1.0400);">Diameter</div>
<div class="t" style="left:206.60px;top:541.00px;font-size:13.24px;font-family:'Liberation Sans',sans-serif;font-weight:normal;color:#333;transform:scaleX(1.1140);">offset z</div>
<div class="t" style="left:48.10px;top:566.00px;font-size:12.71px;font-family:'Liberation Sans',sans-serif;font-weight:bold;color:#000;transform:scaleX(1.2166);-webkit-text-stroke:0.3px #000;">0</div>
<div class="t" style="left:137.60px;top:566.00px;font-size:12.71px;font-family:'Liberation Sans',sans-serif;font-weight:bold;color:#000;transform:scaleX(1.0892);-webkit-text-stroke:0.3px #000;">0</div>
<div class="t" style="left:210.50px;top:566.00px;font-size:12.71px;font-family:'Liberation Sans',sans-serif;font-weight:bold;color:#000;transform:scaleX(1.2669);-webkit-text-stroke:0.3px #000;">0.000</div>
<div class="t" style="left:82.60px;top:590.00px;font-size:13.52px;font-family:'Liberation Sans',sans-serif;font-weight:bold;color:#000;transform:scaleX(1.1265);-webkit-text-stroke:0.3px #000;">No tool description available</div>
<div class="fr" style="left:2px;top:624px;width:367px;height:88px;"></div>
<div class="t" style="left:160.80px;top:617.00px;font-size:13.66px;font-family:'Liberation Sans',sans-serif;font-weight:bold;color:#000;transform:scaleX(1.0439);background:#edeceb;padding:0 2px;margin-left:-2px;-webkit-text-stroke:0.3px #000;">G-Code</div>
<div class="t" style="left:8.50px;top:642.00px;font-size:15.12px;font-family:'Liberation Sans',sans-serif;font-weight:bold;color:#000;transform:scaleX(1.0570);-webkit-text-stroke:0.3px #000;">M0 M5 M9 M48 M53</div>
<div class="t" style="left:8.50px;top:671.00px;font-size:15.12px;font-family:'Liberation Sans',sans-serif;font-weight:bold;color:#000;transform:scaleX(1.0290);-webkit-text-stroke:0.3px #000;">G8 G17 G21 G40 G49 G54 G64 G80</div>
<div class="t" style="left:13.60px;top:686.00px;font-size:15.12px;font-family:'Liberation Sans',sans-serif;font-weight:bold;color:#000;transform:scaleX(1.0298);-webkit-text-stroke:0.3px #000;">G90 G91.1 G94 G97 G99</div>
<div class="t" style="left:301.40px;top:642.00px;font-size:15.12px;font-family:'Liberation Sans',sans-serif;font-weight:bold;color:#000;transform:scaleX(0.8229);-webkit-text-stroke:0.3px #000;">F</div>
<div class="t" style="left:356.00px;top:643.00px;font-size:14.57px;font-family:'Liberation Sans',sans-serif;font-weight:bold;color:#000;transform:scaleX(0.9874);-webkit-text-stroke:0.3px #000;">0</div>
<div class="t" style="left:301.40px;top:678.00px;font-size:15.12px;font-family:'Liberation Sans',sans-serif;font-weight:bold;color:#000;transform:scaleX(0.8034);-webkit-text-stroke:0.3px #000;">S</div>
<div class="t" style="left:356.00px;top:679.00px;font-size:14.57px;font-family:'Liberation Sans',sans-serif;font-weight:bold;color:#000;transform:scaleX(0.9874);-webkit-text-stroke:0.3px #000;">0</div>
<div class="fr" style="left:372px;top:524px;width:202px;height:82px;"></div>
<div class="t" style="left:420.70px;top:516.00px;font-size:14.10px;font-family:'Liberation Sans',sans-serif;font-weight:bold;color:#000;transform:scaleX(1.0557);background:#edeceb;padding:0 2px;margin-left:-2px;-webkit-text-stroke:0.3px #000;">Rapid Override</div>
<div class="t" style="left:410.70px;top:541.00px;font-size:21.08px;font-family:'Liberation Sans',sans-serif;font-weight:bold;color:#000;transform:scaleX(1.1202);-webkit-text-stroke:0.3px #000;">Vel.</div>
<div class="t" style="left:520.90px;top:542.00px;font-size:20.71px;font-family:'Liberation Sans',sans-serif;font-weight:bold;color:#000;transform:scaleX(1.0593);-webkit-text-stroke:0.3px #000;">0</div>
<div class="btn" style="left:380px;top:569px;width:32px;height:32px;"></div>
<div class="btn" style="left:535px;top:569px;width:32px;height:32px;"></div>
<div class="t" style="left:394.50px;top:580.00px;font-size:10.00px;font-family:'Liberation Sans',sans-serif;font-weight:normal;color:#000;transform:scaleX(1.0511);">-</div>
<div class="t" style="left:547.30px;top:578.00px;font-size:14.83px;font-family:'Liberation Sans',sans-serif;font-weight:normal;color:#000;transform:scaleX(0.9816);">+</div>
<div style="position:absolute;left:415px;top:568px;width:117px;height:34px;border:1px solid #2a2a2a;border-radius:3px;background:#f2f1f0;overflow:hidden"><div style="position:absolute;left:0;top:0;width:79px;height:34px;background:#fd8019;"></div></div>
<div class="t" style="left:455.60px;top:580.00px;font-size:13.14px;font-family:'Liberation Sans',sans-serif;font-weight:normal;color:#222;transform:scaleX(1.0225);">100 %</div>
<div class="fr" style="left:372px;top:618px;width:202px;height:95px;"></div>
<div class="t" style="left:423.20px;top:610.00px;font-size:14.10px;font-family:'Liberation Sans',sans-serif;font-weight:bold;color:#000;transform:scaleX(1.0663);background:#edeceb;padding:0 2px;margin-left:-2px;-webkit-text-stroke:0.3px #000;">Feed Override</div>
<div class="t" style="left:429.70px;top:642.00px;font-size:21.37px;font-family:'Liberation Sans',sans-serif;font-weight:bold;color:#000;transform:scaleX(0.8656);-webkit-text-stroke:0.3px #000;">F</div>
<div class="t" style="left:457.40px;top:641.00px;font-size:21.00px;font-family:'Liberation Sans',sans-serif;font-weight:bold;color:#000;transform:scaleX(1.1220);-webkit-text-stroke:0.3px #000;">0</div>
<div class="btn" style="left:523px;top:630px;width:44px;height:42px;"></div>
<div class="t" style="left:528.00px;top:645.00px;font-size:13.14px;font-family:'Liberation Sans',sans-serif;font-weight:normal;color:#000;transform:scaleX(1.0708);">100%</div>
<div class="btn" style="left:380px;top:676px;width:32px;height:32px;"></div>
<div class="btn" style="left:535px;top:676px;width:32px;height:32px;"></div>
<div class="t" style="left:394.50px;top:686.00px;font-size:10.00px;font-family:'Liberation Sans',sans-serif;font-weight:normal;color:#000;transform:scaleX(1.0511);">-</div>
<div class="t" style="left:547.30px;top:685.00px;font-size:14.83px;font-family:'Liberation Sans',sans-serif;font-weight:normal;color:#000;transform:scaleX(0.9816);">+</div>
<div style="position:absolute;left:415px;top:675px;width:117px;height:34px;border:1px solid #2a2a2a;border-radius:3px;background:#f2f1f0;overflow:hidden"><div style="position:absolute;left:0;top:0;width:79px;height:34px;background:#fd8019;"></div></div>
<div class="t" style="left:455.60px;top:687.00px;font-size:13.14px;font-family:'Liberation Sans',sans-serif;font-weight:normal;color:#222;transform:scaleX(1.0225);">100 %</div>
<div class="fr" style="left:577px;top:525px;width:69px;height:188px;"></div>
<div class="t" style="left:586.70px;top:516.00px;font-size:14.10px;font-family:'Liberation Sans',sans-serif;font-weight:bold;color:#000;transform:scaleX(1.0064);background:#edeceb;padding:0 2px;margin-left:-2px;-webkit-text-stroke:0.3px #000;">Cooling</div>
<div class="btn" style="left:585px;top:541px;width:52px;height:52px;"></div>
<div class="btn" style="left:585px;top:650px;width:52px;height:52px;"></div>
<div class="fr" style="left:649px;top:525px;width:227px;height:188px;"></div>
<div class="t" style="left:714.70px;top:516.00px;font-size:14.10px;font-family:'Liberation Sans',sans-serif;font-weight:bold;color:#000;transform:scaleX(1.0776);background:#edeceb;padding:0 2px;margin-left:-2px;-webkit-text-stroke:0.3px #000;">Spindle [rpm]</div>
<div class="t" style="left:722.80px;top:551.00px;font-size:21.37px;font-family:'Liberation Sans',sans-serif;font-weight:bold;color:#000;transform:scaleX(1.0446);-webkit-text-stroke:0.3px #000;">S 0</div>
<div class="btn" style="left:825px;top:537px;width:44px;height:44px;"></div>
<div class="t" style="left:830.00px;top:553.00px;font-size:13.14px;font-family:'Liberation Sans',sans-serif;font-weight:normal;color:#000;transform:scaleX(1.0708);">100%</div>
<div class="btn" style="left:657px;top:585px;width:32px;height:32px;"></div>
<div class="btn" style="left:837px;top:585px;width:32px;height:32px;"></div>
<div class="t" style="left:671.50px;top:596.00px;font-size:10.00px;font-family:'Liberation Sans',sans-serif;font-weight:normal;color:#000;transform:scaleX(1.0511);">-</div>
<div class="t" style="left:849.80px;top:594.00px;font-size:14.83px;font-family:'Liberation Sans',sans-serif;font-weight:normal;color:#000;transform:scaleX(0.9816);">+</div>
<div style="position:absolute;left:692px;top:584px;width:142px;height:33px;border:1px solid #2a2a2a;border-radius:3px;background:#f2f1f0;overflow:hidden"><div style="position:absolute;left:0;top:0;width:101px;height:33px;background:#fd8019;"></div></div>
<div class="t" style="left:745.50px;top:596.00px;font-size:13.14px;font-family:'Liberation Sans',sans-serif;font-weight:normal;color:#222;transform:scaleX(1.0199);">100 %</div>
<div class="btn" style="left:662px;top:624px;width:53px;height:53px;"></div>
<div class="btny" style="left:737px;top:624px;width:53px;height:53px;"></div>
<div class="btn" style="left:812px;top:624px;width:53px;height:53px;"></div>
<div style="position:absolute;left:656px;top:684px;width:185px;height:23px;border:1px solid #6b6b6b;background:#bdbdbd;"></div>
<div class="t" style="left:661.50px;top:693.00px;font-size:10.86px;font-family:'Liberation Sans',sans-serif;font-weight:normal;color:#222;transform:scaleX(1.0768);">0</div>
<div class="t" style="left:745.50px;top:693.00px;font-size:10.86px;font-family:'Liberation Sans',sans-serif;font-weight:normal;color:#222;transform:scaleX(1.0768);">0</div>
<div class="t" style="left:812.00px;top:693.00px;font-size:10.86px;font-family:'Liberation Sans',sans-serif;font-weight:normal;color:#222;transform:scaleX(1.0556);">6000</div>
<svg style="position:absolute;left:845px;top:684px;overflow:visible;will-change:transform" width="24" height="24" viewBox="0 0 24 24"><circle cx="12" cy="12" r="10.8" fill="#00f000" stroke="#1a1a1a" stroke-width="1.2"/></svg>
<div class="btn" style="left:2px;top:717px;width:89px;height:52px;"></div>
<div class="btn" style="left:100px;top:717px;width:89px;height:52px;"></div>
<div class="btn" style="left:198px;top:717px;width:89px;height:52px;"></div>
<div class="btnd" style="left:296px;top:717px;width:89px;height:52px;"></div>
<div class="btn" style="left:394px;top:717px;width:89px;height:52px;"></div>
<div class="btn" style="left:492px;top:717px;width:89px;height:52px;"></div>
<div class="btn" style="left:590px;top:717px;width:89px;height:52px;"></div>
<div class="btny" style="left:688px;top:717px;width:89px;height:52px;"></div>
<div class="btn" style="left:786px;top:717px;width:89px;height:52px;"></div>
<div class="btn" style="left:884px;top:717px;width:89px;height:52px;"></div>
<div class="t" style="left:724.40px;top:737.00px;font-size:14.39px;font-family:'Liberation Sans',sans-serif;font-weight:normal;color:#000;transform:scaleX(0.9956);">M1</div>
<svg style="position:absolute;left:5px;top:463px;overflow:visible;will-change:transform" width="46" height="46" viewBox="0 0 46 46"><g stroke="#000" fill="none"><path d="M17.4 13.5 H19.9 M18.6 13.5 V29 M17.4 29 H19.9" stroke-width="1.3"/><path d="M10.5 29.2 L17.2 33.2 M21.5 33.2 L36 24.5" stroke-width="1.5"/><path d="M16.5 31.6 V34 M21.5 31.6 V34.2 M35.6 22.8 V26" stroke-width="1.3"/></g><text x="21.3" y="28.7" font-family="Liberation Serif" font-weight="bold" font-size="20.6" fill="#000">P</text></svg>
<svg style="position:absolute;left:58px;top:463px;overflow:visible;will-change:transform" width="46" height="46" viewBox="0 0 46 46"><g stroke="#000" fill="none"><path d="M12.4 12.6 H14.8 M13.6 12.6 V29.3 M12.4 29.3 H14.8" stroke-width="1.3"/><path d="M15.4 32.4 H33.8 M15.6 31 V33.8 M33.6 31 V33.8" stroke-width="1.4"/></g><text x="17.5" y="27.9" font-family="Liberation Serif" font-weight="bold" font-size="19.8" fill="#000">X</text></svg>
<svg style="position:absolute;left:111px;top:463px;overflow:visible;will-change:transform" width="46" height="46" viewBox="0 0 46 46"><g stroke="#000" fill="none"><path d="M12.4 12.6 H14.8 M13.6 12.6 V29.3 M12.4 29.3 H14.8" stroke-width="1.3"/><path d="M15.4 32.4 H33.8 M15.6 31 V33.8 M33.6 31 V33.8" stroke-width="1.4"/></g><text x="17.5" y="27.9" font-family="Liberation Serif" font-weight="bold" font-size="19.8" fill="#000">Y</text></svg>
<svg style="position:absolute;left:164px;top:463px;overflow:visible;will-change:transform" width="46" height="46" viewBox="0 0 46 46"><g stroke="#000" fill="none"><path d="M12.4 12.6 H14.8 M13.6 12.6 V29.3 M12.4 29.3 H14.8" stroke-width="1.3"/><path d="M15.4 32.4 H33.8 M15.6 31 V33.8 M33.6 31 V33.8" stroke-width="1.4"/></g><text x="18.2" y="27.9" font-family="Liberation Serif" font-weight="bold" font-size="19.8" fill="#000">Z</text></svg>
<svg style="position:absolute;left:257px;top:463px;overflow:visible;will-change:transform" width="46" height="46" viewBox="0 0 46 46"><defs><radialGradient id="lens" cx="0.45" cy="0.35" r="0.7"><stop offset="0" stop-color="#f2f8ff"/><stop offset="0.5" stop-color="#b9d6fb"/><stop offset="1" stop-color="#6a9de6"/></radialGradient>
    <linearGradient id="hnd" x1="0" y1="0" x2="1" y2="0"><stop offset="0" stop-color="#ffd23a"/><stop offset="1" stop-color="#f07b00"/></linearGradient></defs>
    <line x1="27.5" y1="27.5" x2="36" y2="35.8" stroke="#c8380a" stroke-width="5" stroke-linecap="round"/>
    <line x1="27.5" y1="27.5" x2="36" y2="35.8" stroke="#ffa21f" stroke-width="3" stroke-linecap="round"/>
    <line x1="26.3" y1="26.3" x2="28.3" y2="28.3" stroke="#9a9a9a" stroke-width="3"/>
    <circle cx="19" cy="18" r="9.6" fill="url(#lens)" stroke="#8e8e8e" stroke-width="2"/><path d="M14.6 24.6 H19.8 V29.2 H24.4 V34.4 H19.8 V39 H14.6 V34.4 H10 V29.2 H14.6 Z" fill="#0e9a12" stroke="#d8f0d8" stroke-width="2.2" paint-order="stroke"/><path d="M14.6 24.6 H19.8 V29.2 H24.4 V34.4 H19.8 V39 H14.6 V34.4 H10 V29.2 H14.6 Z" fill="#0e9a12" stroke="#4a9a4a" stroke-width="0.6"/></svg>
<svg style="position:absolute;left:310px;top:463px;overflow:visible;will-change:transform" width="46" height="46" viewBox="0 0 46 46"><defs><radialGradient id="lens" cx="0.45" cy="0.35" r="0.7"><stop offset="0" stop-color="#f2f8ff"/><stop offset="0.5" stop-color="#b9d6fb"/><stop offset="1" stop-color="#6a9de6"/></radialGradient>
    <linearGradient id="hnd" x1="0" y1="0" x2="1" y2="0"><stop offset="0" stop-color="#ffd23a"/><stop offset="1" stop-color="#f07b00"/></linearGradient></defs>
    <line x1="27.5" y1="27.5" x2="36" y2="35.8" stroke="#c8380a" stroke-width="5" stroke-linecap="round"/>
    <line x1="27.5" y1="27.5" x2="36" y2="35.8" stroke="#ffa21f" stroke-width="3" stroke-linecap="round"/>
    <line x1="26.3" y1="26.3" x2="28.3" y2="28.3" stroke="#9a9a9a" stroke-width="3"/>
    <circle cx="19" cy="18" r="9.6" fill="url(#lens)" stroke="#8e8e8e" stroke-width="2"/><rect x="10" y="29.2" width="14.6" height="5.4" fill="#0e9a12" stroke="#d8f0d8" stroke-width="2.2" paint-order="stroke"/><rect x="10" y="29.2" width="14.6" height="5.4" fill="#0e9a12" stroke="#4a9a4a" stroke-width="0.6"/></svg>
<svg style="position:absolute;left:363px;top:463px;overflow:visible;will-change:transform" width="46" height="46" viewBox="0 0 46 46">
    <path d="M10.5 27.5 L13 27 A 12 12 0 0 1 36 27.6 L35.5 37.5 L10.5 33.5 Z M16.5 28 A 7 7 0 0 1 29.5 28.8 Z" fill="#f0a818" stroke="#c87c00" stroke-width="0.8" fill-rule="evenodd"/>
    <path d="M10.5 27.5 L35.8 31.5 L35.5 37.5 L10.5 33.5 Z" fill="#f5b020" stroke="#c87c00" stroke-width="0.8"/>
    <path d="M13 30 V32 M16 30.5 V32.5 M19 31 V33 M22 31.5 V33.5 M25 32 V34 M28 32.5 V34.5" stroke="#9a6000" stroke-width="0.6"/>
    <path d="M27.3 14 H32 V40.3 H27.3 Z" fill="#8a98a8" stroke="#4a5868" stroke-width="0.8"/>
    <path d="M18 9.2 L34 10.5 L35.6 13.8 L27 14 L24 12.6 L18 12 Z" fill="#c8d0da" stroke="#5a6878" stroke-width="0.8"/>
    <path d="M18 14 L30 15 L35.6 16.8 L32 19 L27 18 L18 16.5 Z" fill="#c0c8d2" stroke="#5a6878" stroke-width="0.8"/>
    <path d="M32 20 L36 21.5 L37 24 L32 25 Z" fill="#b0bac6" stroke="#5a6878" stroke-width="0.8"/>
    </svg>
<svg style="position:absolute;left:416px;top:463px;overflow:visible;will-change:transform" width="46" height="46" viewBox="0 0 46 46"><g transform="translate(14 33.5) rotate(-41)">
    <path d="M0 0 L5 -3.1 L24 -3.1 Q26.5 -3.1 26.5 0 Q26.5 3.1 24 3.1 L5 3.1 Z" fill="#f28a0c" stroke="#8a1010" stroke-width="1"/>
    <path d="M6 -1 H23" stroke="#ffd890" stroke-width="1.2"/>
    <path d="M0 0 L5 -3.1 L5 3.1 Z" fill="#f8e8c8" stroke="#8a1010" stroke-width="0.8"/>
    <path d="M0 0 L1.8 -1.1 L1.8 1.1 Z" fill="#222"/>
    <path d="M22.5 -3 Q21.5 0 22.5 3" stroke="#9aa8c0" stroke-width="1.2" fill="none"/>
    </g></svg>
<svg style="position:absolute;left:469px;top:463px;overflow:visible;will-change:transform" width="46" height="46" viewBox="0 0 46 46">
    <ellipse cx="27" cy="34" rx="10" ry="2.5" fill="#000" opacity="0.12"/>
    <g transform="translate(14.6 11.3) rotate(-33)">
    <rect x="-2.2" y="-3.5" width="4.4" height="10" rx="2.2" fill="#c8842c" stroke="#8a5a1a" stroke-width="0.7"/>
    <circle cx="0" cy="-1.3" r="0.7" fill="#fff"/>
    <rect x="-4.5" y="6" width="9" height="1.6" fill="#e8d020"/>
    <rect x="-4.6" y="7.4" width="9.2" height="3.4" rx="1" fill="#cc1818" stroke="#7a0a0a" stroke-width="0.6"/>
    <path d="M-4.4 10.8 L4.4 10.8 L9 24 Q0 26.5 -8.6 24 Z" fill="#ecd030" stroke="#b89a10" stroke-width="0.7"/>
    <path d="M-2 11 L-4.5 24.5 M0 11 L0 25.5 M2 11 L4.5 24.5" stroke="#c8a818" stroke-width="0.6"/>
    </g></svg>
<svg style="position:absolute;left:884px;top:23px;overflow:visible;will-change:transform" width="92" height="54" viewBox="0 0 92 54"><rect x="21.2" y="4.9" width="47.3" height="43.8" fill="#ffff00"/>
    <line x1="21.7" y1="4.9" x2="21.7" y2="48.7" stroke="#5a3a00" stroke-width="1"/>
    <line x1="68.2" y1="4.9" x2="68.2" y2="48.7" stroke="#b08000" stroke-width="0.6"/>
    <circle cx="45.2" cy="27.1" r="19.6" fill="none" stroke="#ff1010" stroke-width="2.6"/>
    <circle cx="45.3" cy="27.1" r="9.2" fill="#ff1010" stroke="#301010" stroke-width="0.9"/>
    <defs><path id="arc" d="M 32.45 28.2 A 12.8 12.8 0 1 1 57.67 29.98"/></defs>
    <text font-family="Liberation Sans" font-size="5.6" font-weight="bold" fill="#1e2a8a"><textPath href="#arc" textLength="43" lengthAdjust="spacingAndGlyphs">Emergency-Stop</textPath></text></svg>
<svg style="position:absolute;left:884px;top:114px;overflow:visible;will-change:transform" width="92" height="54" viewBox="0 0 92 54"><defs><clipPath id="pwc"><rect x="0" y="6" width="92" height="44"/></clipPath></defs>
    <g clip-path="url(#pwc)"><ellipse cx="45.9" cy="27.8" rx="24" ry="23.2" fill="#00ee00"/></g>
    <ellipse cx="45.9" cy="14" rx="16" ry="7.5" fill="#c8ffc8" opacity="0.5"/>
    <path d="M 39.6 16.4 A 14.1 14.1 0 1 0 52.2 16.4" fill="none" stroke="#0a3a0a" stroke-width="5.2" opacity="0.55" transform="translate(0.4 1.6)"/>
    <path d="M 39.6 15.9 A 14.1 14.1 0 1 0 52.2 15.9" fill="none" stroke="#ffffff" stroke-width="5.2"/>
    <rect x="43.1" y="9" width="5.6" height="20.2" fill="#ffffff"/>
    <rect x="43.1" y="28.6" width="5.6" height="1.4" fill="#0a4a0a" opacity="0.6"/></svg>
<svg style="position:absolute;left:884px;top:205px;overflow:visible;will-change:transform" width="92" height="54" viewBox="0 0 92 54"><rect x="24.2" y="6.5" width="42" height="41.3" rx="5.5" fill="#fffef0" opacity="0.6"/><rect x="24.7" y="7" width="41" height="40.3" rx="5" fill="#6f6750" stroke="#3a3426" stroke-width="1"/><g transform="rotate(0 34.8 16.0)"><path d="M31.999999999999996 22.5 V16.88 H30.699999999999996 L34.8 9.5 L38.9 16.88 H37.599999999999994 V22.5 Z" fill="#ea6418" stroke="#3a3020" stroke-width="0.6"/></g><g transform="rotate(0 45 16.9)"><path d="M42.1 23.2 V17.98 H40.9 L45 10.6 L49.1 17.98 H47.9 V23.2 Z" fill="#e8c048" stroke="#3a3020" stroke-width="0.6"/></g><g transform="rotate(180 55.7 16.0)"><path d="M52.900000000000006 22.5 V16.88 H51.6 L55.7 9.5 L59.800000000000004 16.88 H58.5 V22.5 Z" fill="#ea6418" stroke="#3a3020" stroke-width="0.6"/></g><g transform="rotate(180 34.8 38.400000000000006)"><path d="M31.999999999999996 44.6 V39.580000000000005 H30.699999999999996 L34.8 32.2 L38.9 39.580000000000005 H37.599999999999994 V44.6 Z" fill="#b4ea20" stroke="#3a3020" stroke-width="0.6"/></g><g transform="rotate(180 45 37.3)"><path d="M42.1 43.6 V38.38 H40.9 L45 31 L49.1 38.38 H47.9 V43.6 Z" fill="#e8c048" stroke="#3a3020" stroke-width="0.6"/></g><g transform="rotate(0 55.7 38.1)"><path d="M52.900000000000006 44.4 V39.18 H51.6 L55.7 31.8 L59.800000000000004 39.18 H58.5 V44.4 Z" fill="#b4ea20" stroke="#3a3020" stroke-width="0.6"/></g><g transform="rotate(-90 34.2 24.1)"><path d="M31.000000000000004 30.9 V24.14 H30.400000000000002 L34.2 17.3 L38.0 24.14 H37.400000000000006 V30.9 Z" fill="#e8c048" stroke="#3a3020" stroke-width="0.6"/></g><g transform="rotate(90 55.8 24.1)"><path d="M52.599999999999994 30.9 V24.14 H52.0 L55.8 17.3 L59.599999999999994 24.14 H59.0 V30.9 Z" fill="#e8c048" stroke="#3a3020" stroke-width="0.6"/></g></svg>
<svg style="position:absolute;left:884px;top:296px;overflow:visible;will-change:transform" width="92" height="54" viewBox="0 0 92 54"><defs><linearGradient id="pg" x1="0" x2="1"><stop offset="0" stop-color="#f4f4f4"/><stop offset="0.4" stop-color="#cfcfcf"/><stop offset="1" stop-color="#e8e8e8"/></linearGradient>
    <linearGradient id="gd" x1="0" x2="1"><stop offset="0" stop-color="#fff2c8"/><stop offset="0.5" stop-color="#e0a838"/><stop offset="1" stop-color="#c88a18"/></linearGradient></defs>
    <rect x="28.8" y="5.8" width="30.5" height="30.3" fill="url(#pg)" stroke="#000" stroke-width="1.6"/>
    <rect x="45.3" y="8.8" width="20.5" height="26" fill="url(#gd)" stroke="#000" stroke-width="1.4"/>
    <rect x="46" y="15.8" width="19.2" height="4.2" fill="#2a66cc"/>
    <path d="M49 13 H54 M56 13 H59 M61 13 H63 M49 24 H53 M55 24 H58 M60 24 H63 M50 26.5 H53 M55 26.5 H57 M49 29.5 H53 M55 29.5 H58" stroke="#5a4010" stroke-width="1"/>
    <g font-family="Liberation Sans" font-weight="bold" font-size="22.7" text-anchor="middle"><text x="0" y="0" transform="translate(46.2 49.2) scale(1.075 1)" fill="#111" stroke="#111" stroke-width="2" stroke-linejoin="round" opacity="0.9">MDI</text><text x="0" y="0" transform="translate(45.4 48) scale(1.075 1)" fill="#fff">MDI</text></g></svg>
<svg style="position:absolute;left:884px;top:387px;overflow:visible;will-change:transform" width="92" height="54" viewBox="0 0 92 54">
    <polygon points="22.6,5.9 37.6,6.6 38.3,17.2 24.3,20.2" fill="#ececec" stroke="#222" stroke-width="0.8"/>
    <polygon points="26.8,8.0 36.6,8.5 37.0,16.3 27.5,18.0" fill="#0a0a0a"/>
    <path d="M29.5 13.5 L31 11 L32.5 12.5 L34 10.5 L35.5 12" stroke="#b040d0" stroke-width="0.9" fill="none"/>
    <polygon points="24.3,20.2 38.3,17.4 44.9,24.0 26.4,27.5" fill="#b8b8c2" stroke="#555" stroke-width="0.7"/>
    <path d="M27 21.5 L38 19.5 M27.5 23.5 L40 21.5 M28 25.5 L41.5 23.5" stroke="#888" stroke-width="0.5"/>
    <path d="M43.1 6.3 H50.8 V13 H53.2 L49.8 16.7 L46 13 H48.2 V8.7 H43.1 Z" fill="#c00000" stroke="#7a0000" stroke-width="0.5"/>
    <path d="M28.5 30.6 L32 34.8 H30.3 V39 H34.8 V42.4 H27.1 V34.8 H25 Z" fill="#00e000" stroke="#008800" stroke-width="0.5"/>
    <polygon points="37.2,33.4 55.0,26.8 69.6,31.0 68.9,36.2 55.0,49.4 37.2,39.0" fill="#2e2e2e" stroke="#111" stroke-width="0.6"/>
    <polygon points="39.7,34.1 54.3,28.5 64.7,30.6 55.0,41.5 39.7,36.5" fill="#d9ccaa" stroke="#666" stroke-width="0.5"/>
    <path d="M42 34 L53 29.5 M44 36 L56 31 M46.5 38.5 L59 33 M45 31 L52 39 M49 30 L56 37.5" stroke="#7a6e56" stroke-width="0.45" fill="none"/>
    <rect x="51.5" y="18.8" width="3.5" height="9" fill="#333"/>
    <rect x="64" y="22.3" width="3.5" height="8.3" fill="#333"/>
    <polygon points="53.6,19.5 66.1,22.3 66.1,24.4 53.6,21.6" fill="#c8c8d0" stroke="#444" stroke-width="0.4"/>
    <rect x="55.3" y="13.2" width="2.5" height="3.5" fill="#d01010"/>
    <rect x="54.3" y="16.5" width="4.6" height="5.5" fill="#c0c0c0" stroke="#444" stroke-width="0.4"/>
    <circle cx="56.6" cy="19" r="1.6" fill="#e8e8e8" stroke="#666" stroke-width="0.3"/>
    <rect x="66" y="24.4" width="3.6" height="3.4" fill="#d01010"/>
    <polygon points="55,41.8 69.6,31.3 69.6,33.5 55,44" fill="#d0d0d8" stroke="#555" stroke-width="0.4"/>
    <circle cx="43.5" cy="42.4" r="1.7" fill="#d01010"/>
    <circle cx="42.3" cy="42.8" r="1" fill="#c8c8c8"/></svg>
<svg style="position:absolute;left:884px;top:478px;overflow:visible;will-change:transform" width="92" height="54" viewBox="0 0 92 54">
    <ellipse cx="45" cy="48" rx="20" ry="1.5" fill="#000" opacity="0.15"/>
    <path d="M23.2 4 L44 22" stroke="#6a6a6a" stroke-width="2.4" stroke-linecap="round"/>
    <path d="M23.2 4 L44 22" stroke="#e6e6e6" stroke-width="1.1" stroke-linecap="round"/>
    <path d="M26.5 43.5 L49.5 19.5" stroke="#10308a" stroke-width="7.2" stroke-linecap="round"/>
    <path d="M26.5 43.5 L49.5 19.5" stroke="#2e66d8" stroke-width="5.6" stroke-linecap="round"/>
    <circle cx="27.5" cy="42.5" r="1.3" fill="#fff"/>
    <path d="M48 21 L52 13 Q50 7 55 5 L58 4.5 L55.5 9 L59 12 L63.5 8.5 Q64 14 59 17 L53 22 Z" fill="#c4c4c4" stroke="#8a8a8a" stroke-width="0.7"/>
    <path d="M52 15 L55.5 18 L53 21 L50 18.5 Z" fill="#5a5a5a"/>
    <path d="M42 25 L62.5 44.5" stroke="#7a0a0a" stroke-width="9" stroke-linecap="round"/>
    <path d="M42 25 L62.5 44.5" stroke="#d42424" stroke-width="7.4" stroke-linecap="round"/>
    <path d="M44 25 L61 41.5" stroke="#f06a6a" stroke-width="1.2" opacity="0.8"/></svg>
<svg style="position:absolute;left:884px;top:569px;overflow:visible;will-change:transform" width="92" height="54" viewBox="0 0 92 54"><g fill="#efefee" stroke="#c6c6c6" stroke-width="1.3">
    <path d="M25.6 14.5 V9 Q25.6 6.6 28 6.6 H40.5 Q42.8 6.6 42.8 9 V14.5"/>
    <path d="M45.6 14.5 V9 Q45.6 6.6 48 6.6 H60 Q62.3 6.6 62.3 9 V14.5"/>
    <rect x="24.6" y="14.5" width="41" height="15"/>
    </g>
    <ellipse cx="44.5" cy="25.8" rx="5.2" ry="7" fill="#ececeb" stroke="#d2d2d2" stroke-width="0.9"/>
    <path d="M41.8 20.5 Q44.5 17.5 48.6 20.5" fill="none" stroke="#c8c8c8" stroke-width="1.2"/>
    <path d="M32.7 47.5 Q33.5 38.5 44.5 37.5 Q55.8 38.5 57 47.5 Z" fill="#ebebea" stroke="#dadada" stroke-width="0.8"/>
    <path d="M60.2 38 V40 M60.2 42 V44" stroke="#cfcfcf" stroke-width="0.8"/></svg>
<svg style="position:absolute;left:884px;top:717px;overflow:visible;will-change:transform" width="92" height="54" viewBox="0 0 92 54">
    <path d="M27.5 13.6 H59.8 L61.9 46.3 H25 Z" fill="#fbfbfb" stroke="#4a4a4a" stroke-width="0.9"/>
    <rect x="25.8" y="43.6" width="35.6" height="2.2" fill="#d5d9d3"/>
    <path d="M25 46.5 H62" stroke="#e08a10" stroke-width="1.1"/>
    <g fill="none" stroke="#3a3a3a" stroke-width="0.75"><ellipse cx="29.90" cy="13.9" rx="1.25" ry="2.6"/><ellipse cx="33.77" cy="13.9" rx="1.25" ry="2.6"/><ellipse cx="37.64" cy="13.9" rx="1.25" ry="2.6"/><ellipse cx="41.51" cy="13.9" rx="1.25" ry="2.6"/><ellipse cx="45.38" cy="13.9" rx="1.25" ry="2.6"/><ellipse cx="49.25" cy="13.9" rx="1.25" ry="2.6"/><ellipse cx="53.12" cy="13.9" rx="1.25" ry="2.6"/><ellipse cx="56.99" cy="13.9" rx="1.25" ry="2.6"/></g>
    <path d="M29.5 20.5 H57 M29.5 22.7 H44 M29.5 25.5 H56 M29.5 27.6 H47 M29.5 30.5 H42 M29.5 35.5 H58 M29.5 38.5 H46" stroke="#9a9a9a" stroke-width="0.9" stroke-dasharray="3.2 1.2"/>
    <g transform="translate(44.5 38.3) rotate(-42.3)">
    <path d="M0 0 L5.5 -3 H29.5 Q31.5 -3 31.5 0 Q31.5 3 29.5 3 H5.5 Z" fill="#f7a030" stroke="#c86000" stroke-width="0.9"/>
    <path d="M6 -1 H29" stroke="#ffc870" stroke-width="1"/>
    <path d="M0 0 L5.5 -3 V3 Z" fill="#fff0d8" stroke="#c86000" stroke-width="0.6"/>
    <path d="M0 0 L1.8 -1 V1 Z" fill="#111"/>
    </g></svg>
<svg style="position:absolute;left:585px;top:541px;overflow:visible;will-change:transform" width="54" height="54" viewBox="0 0 54 54"><rect x="5" y="5" width="46.8" height="43.7" fill="#d0d0d0"/><g fill="#00e000" stroke="#00e000" stroke-width="2.2" stroke-linejoin="round"><rect x="26.3" y="9" width="7" height="2.2"/><rect x="29" y="11" width="1.8" height="3.8"/><path d="M14.6 17.8 H35.8 L40.3 18.7 V24.3 H35.8 V23.5 H14.6 Z"/><rect x="27.6" y="14.8" width="4.3" height="8.8"/><path d="M20.9 26.7 L30.1 35.8 L20.9 44.9 L11.8 35.8 Z"/><path d="M36.7 25 H40.9 L42.2 45 H35.4 Z"/></g><rect x="26.3" y="9" width="7" height="2.2" fill="#000" stroke="#111" stroke-width="0.8"/><rect x="29" y="11" width="1.8" height="3.8" fill="#000" stroke="#111" stroke-width="0.8"/><path d="M14.6 17.8 H35.8 L40.3 18.7 V24.3 H35.8 V23.5 H14.6 Z" fill="#d8d8d8" stroke="#111" stroke-width="0.8"/><rect x="27.6" y="14.8" width="4.3" height="8.8" fill="#9a9a9a" stroke="#111" stroke-width="0.8"/><path d="M20.9 26.7 L30.1 35.8 L20.9 44.9 L11.8 35.8 Z" fill="#f4f480" stroke="#111" stroke-width="0.8"/><path d="M36.7 25 H40.9 L42.2 45 H35.4 Z" fill="#0000ff" stroke="#0000ff" stroke-width="0.3"/><path d="M36 18.9 L40 19.3" stroke="#888" stroke-width="0.6"/><rect x="20" y="30" width="2" height="11.4" fill="#000"/></svg>
<svg style="position:absolute;left:585px;top:650px;overflow:visible;will-change:transform" width="54" height="54" viewBox="0 0 54 54"><rect x="5" y="5" width="46.8" height="43.7" fill="#d0d0d0"/><g fill="#00e000" stroke="#00e000" stroke-width="2.2" stroke-linejoin="round"><rect x="26.3" y="9" width="7" height="2.2"/><rect x="29" y="11" width="1.8" height="3.8"/><path d="M14.6 17.8 H35.8 L40.3 18.7 V24.3 H35.8 V23.5 H14.6 Z"/><rect x="27.6" y="14.8" width="4.3" height="8.8"/><path d="M20.9 26.7 L30.1 35.8 L20.9 44.9 L11.8 35.8 Z"/><path d="M37.5 26.2 Q39.5 25.5 41.5 26.8 Q45 26.5 46.6 30 Q48 34 46.8 38 Q47.5 42 44.8 44.2 Q42 46 39.2 44.8 Q35.5 45.2 34.4 41.5 Q33.5 37 35.2 33 Q34.5 28.5 37.5 26.2 Z"/></g><rect x="26.3" y="9" width="7" height="2.2" fill="#000" stroke="#111" stroke-width="0.8"/><rect x="29" y="11" width="1.8" height="3.8" fill="#000" stroke="#111" stroke-width="0.8"/><path d="M14.6 17.8 H35.8 L40.3 18.7 V24.3 H35.8 V23.5 H14.6 Z" fill="#d8d8d8" stroke="#111" stroke-width="0.8"/><rect x="27.6" y="14.8" width="4.3" height="8.8" fill="#9a9a9a" stroke="#111" stroke-width="0.8"/><path d="M20.9 26.7 L30.1 35.8 L20.9 44.9 L11.8 35.8 Z" fill="#f4f480" stroke="#111" stroke-width="0.8"/><path d="M37.5 26.2 Q39.5 25.5 41.5 26.8 Q45 26.5 46.6 30 Q48 34 46.8 38 Q47.5 42 44.8 44.2 Q42 46 39.2 44.8 Q35.5 45.2 34.4 41.5 Q33.5 37 35.2 33 Q34.5 28.5 37.5 26.2 Z" fill="#66ffff" stroke="#66ffff" stroke-width="0.3"/><path d="M36 18.9 L40 19.3" stroke="#888" stroke-width="0.6"/><rect x="20" y="30" width="2" height="11.4" fill="#000"/></svg>
<svg style="position:absolute;left:662px;top:624px;overflow:visible;will-change:transform" width="55" height="55" viewBox="0 0 55 55"><rect x="5" y="5" width="43.9" height="43.9" fill="#d6d5cf"/><g ><path d="M21.5 27.4 Q9 29.5 9 36 Q9.5 42 20.5 43.6 L20.6 40.6 L26.8 44.7 L21.3 49 L21 46.3 Q12 45 11.7 37 Q12 32.5 21.5 30.8 Z" fill="none" stroke="#00e000" stroke-width="2.2"/></g><g ><path d="M21.5 27.4 Q9 29.5 9 36 Q9.5 42 20.5 43.6 L20.6 40.6 L26.8 44.7 L21.3 49 L21 46.3 Q12 45 11.7 37 Q12 32.5 21.5 30.8 Z" fill="#ff0000" stroke="#101010" stroke-width="0.7"/></g>
    <rect x="21.3" y="7.4" width="12" height="22" fill="#d8d8d4" stroke="#00e000" stroke-width="2.2"/>
    <rect x="18.1" y="29.8" width="18" height="7.1" fill="#d8d8d4" stroke="#00e000" stroke-width="2.2"/>
    <rect x="21.3" y="7.4" width="12" height="22" fill="#d8d8d4" stroke="#222" stroke-width="0.8"/>
    <path d="M22.7 37 H31.8 L30.3 40.6 H24.4 Z" fill="#9c9ca0" stroke="#222" stroke-width="0.6"/>
    <rect x="18.1" y="29.8" width="18" height="7.1" fill="#d8d8d4" stroke="#222" stroke-width="0.8"/>
    <rect x="26.6" y="14.9" width="2.1" height="9.9" fill="#00ff40"/></svg>
<svg style="position:absolute;left:737px;top:624px;overflow:visible;will-change:transform" width="55" height="55" viewBox="0 0 55 55"><rect x="6" y="6" width="43.6" height="43.6" fill="#e8e86a"/><rect x="20.9" y="6" width="13.8" height="1.8" fill="#3a0a0a"/><rect x="22.3" y="8.1" width="12.1" height="22.4" fill="#d8d8d4" stroke="#222" stroke-width="0.9"/><text x="28.3" y="26.9" text-anchor="middle" font-family="Liberation Sans" font-weight="bold" font-size="13.4" fill="#ff1010" transform="translate(28.3 0) scale(0.92 1) translate(-28.3 0)">0</text><path d="M23 38.6 L33.6 38.6 L28.3 49.5 Z" fill="#f0f060" stroke="#111" stroke-width="1.4"/><path d="M23 38.6 H33.6 L32 42 H24.6 Z" fill="#a0a0a0"/><rect x="18.2" y="30.2" width="19.3" height="8.2" fill="#d8d8d4" stroke="#cc0000" stroke-width="1.3"/><rect x="18.9" y="30.9" width="18" height="6.8" fill="#d8d8d4" stroke="#222" stroke-width="0.6"/></svg>
<svg style="position:absolute;left:812px;top:624px;overflow:visible;will-change:transform" width="55" height="55" viewBox="0 0 55 55"><rect x="5" y="5" width="43.9" height="43.9" fill="#d6d5cf"/><g transform="translate(55 0) scale(-1 1)"><path d="M21.5 27.4 Q9 29.5 9 36 Q9.5 42 20.5 43.6 L20.6 40.6 L26.8 44.7 L21.3 49 L21 46.3 Q12 45 11.7 37 Q12 32.5 21.5 30.8 Z" fill="none" stroke="#00e000" stroke-width="2.2"/></g><g transform="translate(55 0) scale(-1 1)"><path d="M21.5 27.4 Q9 29.5 9 36 Q9.5 42 20.5 43.6 L20.6 40.6 L26.8 44.7 L21.3 49 L21 46.3 Q12 45 11.7 37 Q12 32.5 21.5 30.8 Z" fill="#ff0000" stroke="#101010" stroke-width="0.7"/></g>
    <rect x="21.7" y="7.4" width="12" height="22" fill="#d8d8d4" stroke="#00e000" stroke-width="2.2"/>
    <rect x="18.5" y="29.8" width="18" height="7.1" fill="#d8d8d4" stroke="#00e000" stroke-width="2.2"/>
    <rect x="21.7" y="7.4" width="12" height="22" fill="#d8d8d4" stroke="#222" stroke-width="0.8"/>
    <path d="M23.1 37 H32.2 L30.7 40.6 H24.8 Z" fill="#9c9ca0" stroke="#222" stroke-width="0.6"/>
    <rect x="18.5" y="29.8" width="18" height="7.1" fill="#d8d8d4" stroke="#222" stroke-width="0.8"/>
    <rect x="27" y="14.9" width="2.1" height="9.9" fill="#00ff40"/></svg>
<svg style="position:absolute;left:2px;top:717px;overflow:visible;will-change:transform" width="92" height="54" viewBox="0 0 92 54">
    <path d="M35.6 17.8 H43 V35.6 H35.6 Z" fill="#a8a8a8" stroke="#555" stroke-width="0.8"/>
    <path d="M42.5 16 H49.5 L53 19.5 V25 H42.5 Z" fill="#f8f8f8" stroke="#444" stroke-width="0.8"/>
    <path d="M44.5 19.5 H49 M44.5 21.5 H49" stroke="#999" stroke-width="0.7"/>
    <path d="M36 23.2 H54.9 V35.6 H36 Z" fill="#77a2dc" stroke="#2a5aa8" stroke-width="1"/>
    <path d="M37 24.5 H54 V28 H37 Z" fill="#a8c6ee" opacity="0.6"/></svg>
<svg style="position:absolute;left:100px;top:717px;overflow:visible;will-change:transform" width="92" height="54" viewBox="0 0 92 54"><defs><linearGradient id="plg" x1="0" y1="0" x2="0" y2="1"><stop offset="0" stop-color="#c8e0ff"/><stop offset="0.35" stop-color="#3a92f6"/><stop offset="0.7" stop-color="#2f90f8"/><stop offset="1" stop-color="#8cccff"/></linearGradient></defs>
    <path d="M24.4 5.6 L65.3 26.8 L24.4 48.3 Z" fill="url(#plg)" stroke="#00289a" stroke-width="2" stroke-linejoin="round"/>
    <path d="M24 5.2 V48.7" stroke="#00289a" stroke-width="2.2"/></svg>
<svg style="position:absolute;left:198px;top:717px;overflow:visible;will-change:transform" width="92" height="54" viewBox="0 0 92 54"><defs><linearGradient id="stg" x1="0" y1="0" x2="0" y2="1"><stop offset="0" stop-color="#e05050"/><stop offset="0.55" stop-color="#d02a2a"/><stop offset="0.6" stop-color="#c00000"/><stop offset="1" stop-color="#c00808"/></linearGradient></defs>
    <ellipse cx="45" cy="46.5" rx="17" ry="2.5" fill="#000" opacity="0.15"/>
    <path d="M34.8 4.9 H55 L67.1 16.5 V34.2 L55 46.7 H34.8 L22.9 34.2 V16.5 Z" fill="url(#stg)" stroke="#8a0000" stroke-width="0.9"/>
    <path d="M36.5 15.5 L53.5 32.5 M53.5 15.5 L36.5 32.5" stroke="#ff2020" stroke-width="7.6"/>
    <path d="M36.5 15.5 L53.5 32.5 M53.5 15.5 L36.5 32.5" stroke="#e4e4e4" stroke-width="5.6"/></svg>
<svg style="position:absolute;left:296px;top:717px;overflow:visible;will-change:transform" width="92" height="54" viewBox="0 0 92 54"><defs><linearGradient id="pag" x1="0" y1="0" x2="0" y2="1"><stop offset="0" stop-color="#eceeef"/><stop offset="0.35" stop-color="#cacdd1"/><stop offset="0.7" stop-color="#c8cbcf"/><stop offset="1" stop-color="#e6e8ea"/></linearGradient></defs>
    <rect x="23.5" y="4.7" width="15" height="44" fill="url(#pag)"/>
    <rect x="23.5" y="4.7" width="1.9" height="44" fill="#a9a9ad"/>
    <rect x="36.6" y="4.7" width="1.9" height="44" fill="#a9a9ad"/>
    <rect x="50.6" y="4.7" width="15" height="44" fill="url(#pag)"/>
    <rect x="50.6" y="4.7" width="1.9" height="44" fill="#a9a9ad"/>
    <rect x="63.7" y="4.7" width="1.9" height="44" fill="#a9a9ad"/></svg>
<svg style="position:absolute;left:394px;top:717px;overflow:visible;will-change:transform" width="92" height="54" viewBox="0 0 92 54"><g font-family="Liberation Mono" font-weight="bold" font-size="9.6" fill="#444"><text x="33" y="16.9">G0 X10</text><text x="33" y="28.6">G1 Y20</text><text x="33" y="40.3">G1 Z30</text></g><path d="M31.5 14.5 H23.2 V23.5 H31.5 M31.5 26.7 H23.2 V35.6 H31.5" fill="none" stroke="#000" stroke-width="1.6"/></svg>
<svg style="position:absolute;left:492px;top:717px;overflow:visible;will-change:transform" width="92" height="54" viewBox="0 0 92 54"><g font-family="Liberation Mono" font-weight="bold" font-size="9.6" fill="#c4c4c4"><text x="33" y="16.9">G0 X10</text><text x="33" y="28.6">G1 Y20</text><text x="33" y="40.3">G1 Z30</text></g><path d="M31.5 25 H26.9 V42" fill="none" stroke="#a8a8a8" stroke-width="1.2"/><path d="M24.2 40 L26.9 44.5 L29.6 40 Z" fill="#a8a8a8"/></svg>
<svg style="position:absolute;left:590px;top:717px;overflow:visible;will-change:transform" width="92" height="54" viewBox="0 0 92 54"><path d="M46.9 16.4 H37.5 V34.2 H44" fill="none" stroke="#ff0000" stroke-width="1.2"/>
    <path d="M43.5 31.6 L47.5 34.2 L43.5 36.8 Z" fill="#ff0000"/>
    <path d="M53.5 19.2 L48.8 32.8" stroke="#000" stroke-width="2"/></svg>
<svg style="position:absolute;left:786px;top:717px;overflow:visible;will-change:transform" width="92" height="54" viewBox="0 0 92 54"><defs><linearGradient id="fsg" x1="0" y1="0" x2="0" y2="1"><stop offset="0" stop-color="#f4f5f8"/><stop offset="1" stop-color="#e4e7ef"/></linearGradient></defs>
    <rect x="24.9" y="11.8" width="40.5" height="31.6" rx="1.5" fill="url(#fsg)" stroke="#a6adbc" stroke-width="1.4"/>
    <rect x="25.6" y="12.4" width="39.2" height="4" fill="#c8ccd4"/>
    <g fill="#4aa018" stroke="#3a8a10" stroke-width="0.5"><polygon points="27.6,17.8 34.4,17.2 27.0,24.6"/><line x1="30.6" y1="20.8" x2="37.4" y2="27.6" stroke-width="3.2"/><polygon points="63.2,17.8 56.4,17.2 63.8,24.6"/><line x1="60.2" y1="20.8" x2="53.4" y2="27.6" stroke-width="3.2"/><polygon points="27.6,39.6 34.4,40.2 27.0,32.8"/><line x1="30.6" y1="36.6" x2="37.4" y2="29.8" stroke-width="3.2"/><polygon points="63.2,39.6 56.4,40.2 63.8,32.8"/><line x1="60.2" y1="36.6" x2="53.4" y2="29.8" stroke-width="3.2"/></g></svg></body></html>
